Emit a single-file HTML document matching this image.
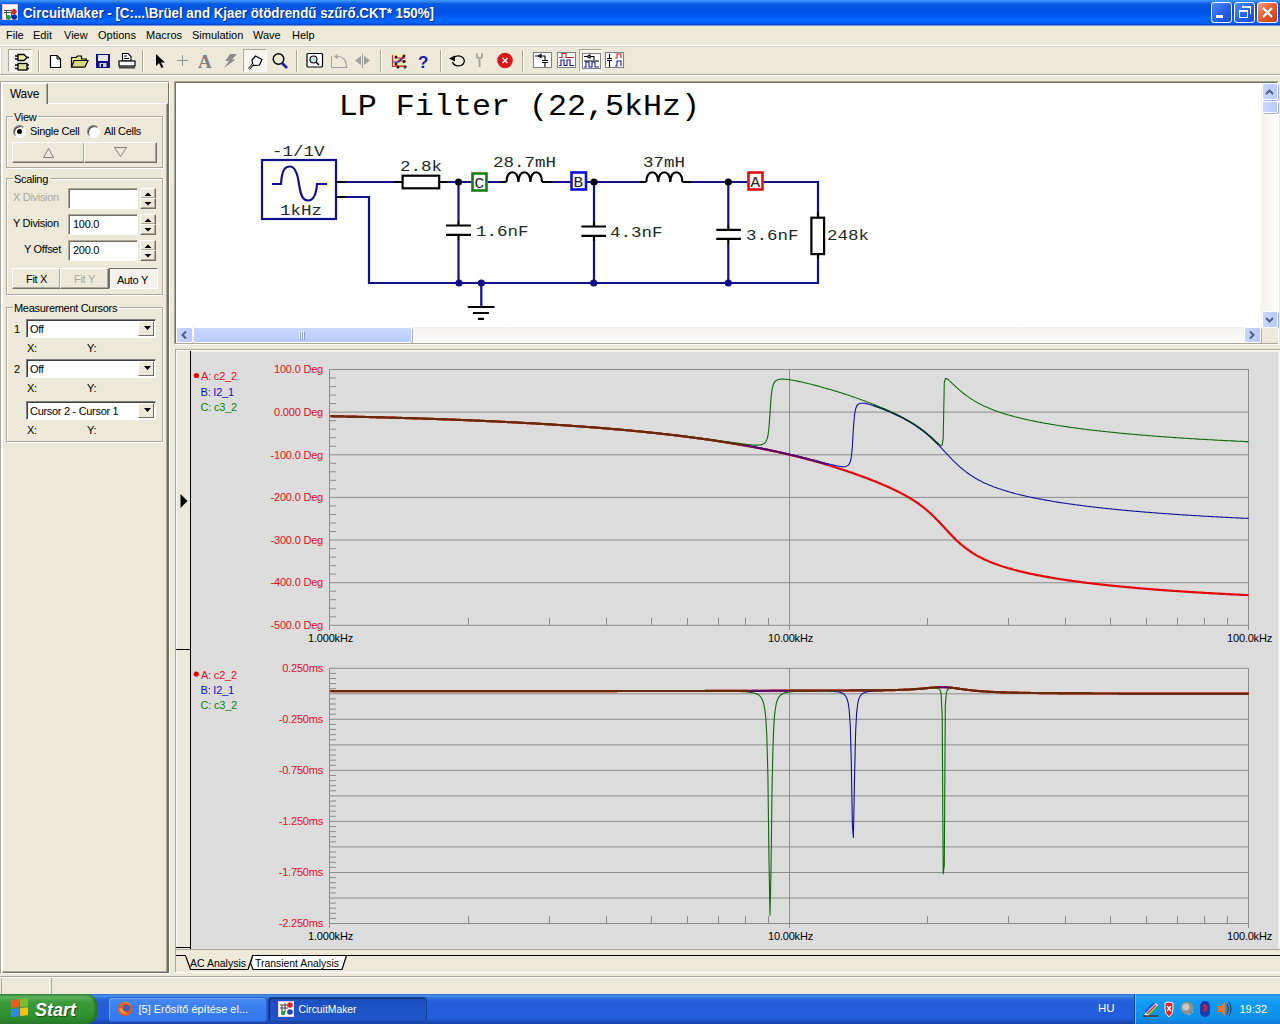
<!DOCTYPE html>
<html><head><meta charset="utf-8">
<style>
*{box-sizing:border-box;margin:0;padding:0}
#lp{letter-spacing:-0.3px}
html,body{width:1280px;height:1024px;overflow:hidden;background:#ece9d8;font-family:"Liberation Sans",sans-serif;font-size:11px;color:#000}
.a{position:absolute}
#title{left:0;top:0;width:1280px;height:26px;background:linear-gradient(#3d9bff 0px,#2a7ef5 2px,#0758e0 4px,#0053e3 9px,#0054e6 14px,#005cf5 16px,#0066ff 19px,#0062fa 23px,#0a3fbf 25px,#e8e8f0 26px)}
#title .t{left:22px;top:5px;color:#fff;font-weight:bold;font-size:13px;letter-spacing:0.1px;white-space:nowrap;text-shadow:1px 1px 0 #0a2a80}
.tb{top:2px;width:21px;height:21px;border:1px solid #fff;border-radius:3px;background:linear-gradient(135deg,#4c8dff,#245ce8 60%,#1b4fd6)}
.menu span{position:absolute;top:29px;font-size:11px}
.sep{width:2px;border-left:1px solid #aca899;border-right:1px solid #fff}
.btn{background:#ece9d8;border-top:1px solid #fff;border-left:1px solid #fff;border-right:1px solid #716f64;border-bottom:1px solid #716f64;box-shadow:inset -1px -1px 0 #aca899;text-align:center}
.grp{border:1px solid #aca899;box-shadow:inset 1px 1px 0 #fff,1px 1px 0 #fff}
.grp .gl{position:absolute;left:6px;top:-6px;background:#ece9d8;padding:0 2px 0 1px}
.edit{background:#fff;border-top:1px solid #aca899;border-left:1px solid #aca899;border-right:1px solid #fff;border-bottom:1px solid #fff;box-shadow:inset 1px 1px 0 #716f64}
.combo{background:#fff;border-top:1px solid #7f7f7f;border-left:1px solid #7f7f7f;border-right:1px solid #fff;border-bottom:1px solid #fff;box-shadow:inset 1px 1px 0 #404040}
.cbtn{position:absolute;right:1px;top:1px;width:16px;bottom:1px;background:#ece9d8;border-top:1px solid #fff;border-left:1px solid #fff;border-right:1px solid #716f64;border-bottom:1px solid #716f64}
.sb{background:linear-gradient(90deg,#c8d6fb,#b7cafb);border:1px solid #fff;border-radius:2px;box-shadow:1px 1px 0 #a0b0d8}
svg{position:absolute;left:0;top:0}
</style></head><body>
<div id="title" class="a">
 <svg width="16" height="16" style="left:2px;top:4px" viewBox="0 0 16 16">
  <rect x="0" y="0" width="16" height="16" fill="#f0c8f0"/>
  <rect x="1" y="1" width="14" height="14" fill="#fff"/>
  <path d="M2 6.5H11M2 8.5H10M4.5 6V15M9.5 8V13.5H12" stroke="#5a4a3a" stroke-width="1" fill="none"/>
  <path d="M11 4.5L15 7.5L11 10.5Z" fill="#d03020"/><circle cx="12" cy="7.5" r="2.6" fill="#d03020"/>
  <circle cx="12.3" cy="13" r="2.8" fill="#1020c0"/>
  <circle cx="6.5" cy="13.5" r="2.4" fill="#20a040"/>
 </svg>
 <svg width="700" height="26" viewBox="0 0 700 26" style="left:0;top:0"><text x="23" y="18.4" font-family="Liberation Sans" font-weight="bold" font-size="14" fill="#0a2a80" textLength="411" lengthAdjust="spacingAndGlyphs" transform="translate(1,1)">CircuitMaker - [C:...\Brüel and Kjaer ötödrendű szűrő.CKT* 150%]</text><text x="23" y="18.4" font-family="Liberation Sans" font-weight="bold" font-size="14" fill="#fff" textLength="411" lengthAdjust="spacingAndGlyphs">CircuitMaker - [C:...\Brüel and Kjaer ötödrendű szűrő.CKT* 150%]</text></svg>
 <div class="a tb" style="left:1211px"><div class="a" style="left:4px;top:12px;width:7px;height:3px;background:#fff"></div></div>
 <div class="a tb" style="left:1234px"><div class="a" style="left:4px;top:7px;width:9px;height:8px;border:1.5px solid #fff;border-top-width:2px"></div><div class="a" style="left:7px;top:3px;width:9px;height:8px;border:1.5px solid #fff;border-top-width:2px;border-left:none;border-bottom:none"></div></div>
 <div class="a tb" style="left:1257px;background:linear-gradient(135deg,#f0a080,#e05a30 50%,#c83c14)"><svg width="19" height="19" style="left:0;top:0"><path d="M5 5L14 14M14 5L5 14" stroke="#fff" stroke-width="2.2"/></svg></div>
</div>
<div class="a menu" style="left:0;top:26px;width:1280px;height:19px">
 <span style="left:6px;top:3px">File</span><span style="left:33px;top:3px">Edit</span><span style="left:64px;top:3px">View</span><span style="left:98px;top:3px">Options</span><span style="left:146px;top:3px">Macros</span><span style="left:192px;top:3px">Simulation</span><span style="left:253px;top:3px">Wave</span><span style="left:292px;top:3px">Help</span>
</div>
<div class="a" style="left:0;top:45px;width:1280px;height:1px;background:#fff"></div>
<div class="a" style="left:0;top:46px;width:1280px;height:1px;background:#d4d0c8"></div>
<div class="a" style="left:0;top:74px;width:1280px;height:1px;background:#aca899"></div>
<div class="a" style="left:0;top:75px;width:1280px;height:1px;background:#fff"></div>
<div class="a" style="left:0px;top:47px;width:2px;height:27px;border-left:1px solid #fff;border-right:1px solid #d8d4c4"></div>
<!-- pressed toggle 1 -->
<div class="a" style="left:8px;top:49px;width:24px;height:23px;background:#f6f5ee;border-top:1px solid #aca899;border-left:1px solid #aca899;border-right:1px solid #fff;border-bottom:1px solid #fff"></div>
<div class="a" style="left:243px;top:49px;width:24px;height:23px;background:#f6f5ee;border-top:1px solid #aca899;border-left:1px solid #aca899;border-right:1px solid #fff;border-bottom:1px solid #fff"></div>
<div class="a" style="left:579px;top:49px;width:23px;height:23px;background:#f6f5ee;border-top:1px solid #aca899;border-left:1px solid #aca899;border-right:1px solid #fff;border-bottom:1px solid #fff"></div>
<div class="a sep" style="left:38px;top:50px;height:22px"></div>
<div class="a sep" style="left:142px;top:50px;height:22px"></div>
<div class="a sep" style="left:296px;top:50px;height:22px"></div>
<div class="a sep" style="left:380px;top:50px;height:22px"></div>
<div class="a sep" style="left:440px;top:50px;height:22px"></div>
<div class="a sep" style="left:522px;top:50px;height:22px"></div>
<svg width="640" height="78" viewBox="0 0 640 78" style="left:0;top:0">
 <!-- gates icon -->
 <g stroke="#000" stroke-width="1.3" fill="#f0f0a0">
  <path d="M18 54.5H24L27 57.5L24 60.5H18Z"/>
  <path d="M15 56H18M15 59H18M27 57.5H29" fill="none"/>
  <rect x="18" y="63.5" width="9" height="6.5" fill="#e0e0a0"/>
  <path d="M15 65H18M15 68.5H18M27 65H29M27 68.5H29" fill="none"/>
 </g>
 <!-- new -->
 <path d="M50.5 55.5H57L60.5 59V67.5H50.5Z" fill="#fff" stroke="#000" stroke-width="1.2"/>
 <path d="M57 55.5V59H60.5" fill="none" stroke="#000" stroke-width="1"/>
 <!-- open -->
 <path d="M71.5 57.5H76L77.5 56H81.5V59H86.5L84 67H71.5Z" fill="#e8e890" stroke="#000" stroke-width="1.2"/>
 <path d="M71.5 67L74 60.5H88L85 67Z" fill="#d8d880" stroke="#000" stroke-width="1.2"/>
 <!-- save -->
 <rect x="96" y="54" width="14" height="14" fill="#10108a"/>
 <rect x="98" y="55" width="10" height="6" fill="#e8e8e8"/>
 <rect x="99.5" y="63" width="7" height="4" fill="#d0d0d0"/>
 <rect x="101" y="64" width="2" height="3" fill="#10108a"/>
 <!-- print -->
 <path d="M122.5 53.5H128L131 56.5V61H122.5Z" fill="#fff" stroke="#000" stroke-width="1.1"/>
 <rect x="119" y="61" width="16" height="5" fill="#fff" stroke="#000" stroke-width="1.2"/>
 <rect x="119" y="66.5" width="16" height="2" fill="#404040"/>
 <path d="M124 56H127M124 58.5H129" stroke="#000" stroke-width="1"/>
 <!-- arrow -->
 <path d="M156 54V66L159 63L161.5 68L163.5 67L161 62.5H165Z" fill="#000"/>
 <!-- plus -->
 <path d="M177 60.5H188M182.5 55V66" stroke="#909090" stroke-width="1"/>
 <!-- A -->
 <text x="198" y="68" font-family="Liberation Serif" font-size="19" fill="#808080" font-weight="bold">A</text>
 <!-- lightning -->
 <path d="M230 54H237L232 59.5H235.5L224 68L229 61H225.5Z" fill="#8c8c8c"/>
 <!-- probe -->
 <path d="M255.5 56L262 59.5L259.5 65L253 65.5L252 60Z" fill="#fff" stroke="#000" stroke-width="1.2"/>
 <path d="M253 64L249 69" stroke="#000" stroke-width="2.2"/>
 <path d="M253 64L249 69" stroke="#fff" stroke-width="0.8"/>
 <!-- magnifier -->
 <circle cx="278.5" cy="59" r="5.3" fill="none" stroke="#000" stroke-width="1.4"/>
 <path d="M282 63L287 68" stroke="#2020b0" stroke-width="2.6"/>
 <!-- zoom window -->
 <rect x="307" y="53.5" width="15.5" height="13.5" fill="#fff" stroke="#000" stroke-width="1.2" rx="1"/>
 <circle cx="313.5" cy="59.5" r="3.5" fill="#c8e0e0" stroke="#000" stroke-width="1.1"/>
 <path d="M316 62L319 65" stroke="#000" stroke-width="1.5"/>
 <!-- rotate disabled -->
 <path d="M331.5 56V67.5H347.5" fill="none" stroke="#a0a0a0" stroke-width="1"/>
 <path d="M337 56.5Q346 56 346.5 67" fill="none" stroke="#a0a0a0" stroke-width="1.2"/>
 <path d="M334 56.5L337.5 54V59Z" fill="#a0a0a0"/>
 <!-- flip disabled -->
 <path d="M361 56V65L355 60.5Z M364 56V65L370 60.5Z" fill="#a0a0a0"/>
 <path d="M362.5 53.5V68" stroke="#a0a0a0" stroke-width="1"/>
 <!-- net -->
 <rect x="392" y="53" width="14" height="14" fill="#f4ee80" opacity="0.35"/>
 <path d="M392.5 55V66.5H407M395 64L404 56M395 58H405M397 61H406M395 66H406" fill="none" stroke="#c03030" stroke-width="1.2"/>
 <path d="M393 62H399L404 57" fill="none" stroke="#3030b0" stroke-width="1.2"/>
 <g fill="#401010"><circle cx="396" cy="57" r="1.5"/><circle cx="404" cy="56" r="1.5"/><circle cx="396" cy="64" r="1.5"/><circle cx="404" cy="61.5" r="1.5"/><circle cx="398" cy="67" r="1.5"/><circle cx="405" cy="67" r="1.5"/></g>
 <!-- ? -->
 <text x="418" y="68" font-family="Liberation Sans" font-size="17" font-weight="bold" fill="#1818b0">?</text>
 <!-- undo -->
 <path d="M454 57.5A6 5 0 1 1 452.5 62" fill="none" stroke="#000" stroke-width="1.3"/>
 <path d="M449 58.5L455 55.5V61.5Z" fill="#000"/>
 <!-- wrench gray -->
 <path d="M477 53.5V57Q479.5 59.5 482 57V53.5M479.5 59V67" fill="none" stroke="#a8a8a0" stroke-width="2"/>
 <!-- stop -->
 <circle cx="505" cy="60.5" r="7.8" fill="#d81818"/>
 <path d="M502.5 58L507.5 63M507.5 58L502.5 63" stroke="#fff" stroke-width="1.4"/>
 <!-- 4 icons -->
 <g stroke-width="1.1" fill="none">
  <rect x="533.5" y="52.5" width="18" height="15" fill="#fff" stroke="#808080"/>
  <path d="M535 56H538L541 54.5V57.5L538 56M541 56H545V60M542 60.5H548M542 62.5H548M545 63V67" stroke="#000"/>
  <rect x="557.5" y="52.5" width="18" height="15" fill="#fff" stroke="#808080"/>
  <path d="M559 57.5H562V53.5H566V57.5H574" stroke="#d02020"/>
  <path d="M559 65.5H561V60H564V65.5H567V60H570V65.5H574" stroke="#1818a0"/>
  <rect x="582.5" y="53.5" width="18" height="15" fill="#fff" stroke="#808080"/>
  <path d="M584 56.5H587L590 55V58L587 56.5M590 56.5H594V60M584 61H599" stroke="#000"/>
  <path d="M584 67H586V62H589V67H592V62H595V67H599" stroke="#1818a0"/>
  <rect x="605.5" y="52.5" width="18" height="15" fill="#fff" stroke="#808080"/>
  <path d="M609.5 54V58M607 58.5H612M607 60.5H612M609.5 61V67" stroke="#000"/>
  <path d="M615 58H617V54H621V58" stroke="#d02020"/>
  <path d="M615 66H617V61H621V66" stroke="#1818a0"/>
 </g>
</svg>
<div id="lp"><!-- left panel frame -->
<div class="a" style="left:0;top:81px;width:170px;height:893px;border-top:1px solid #aca899;border-left:1px solid #aca899;border-right:1px solid #fff;border-bottom:1px solid #fff"></div>
<div class="a" style="left:1px;top:82px;width:168px;height:891px;border-top:1px solid #fff;border-left:1px solid #fff;border-right:1px solid #716f64"></div>
<!-- tab page -->
<div class="a" style="left:2px;top:103px;width:166px;height:870px;border-top:1px solid #fff;border-left:1px solid #fff;border-right:1px solid #716f64;border-bottom:1px solid #716f64;box-shadow:inset -1px -1px 0 #aca899"></div>
<div class="a" style="left:2px;top:83px;width:46px;height:21px;background:#ece9d8;border-top:1px solid #fff;border-left:1px solid #fff;border-right:1px solid #716f64;box-shadow:inset -1px 0 0 #aca899"></div>
<div class="a" style="left:10px;top:87px;font-size:12px">Wave</div>
<!-- View group -->
<div class="a grp" style="left:6px;top:116px;width:157px;height:52px"><span class="gl">View</span></div>
<div class="a" style="left:13px;top:125px;width:13px;height:13px;border-radius:50%;background:radial-gradient(circle at 60% 60%,#fff 45%,#e8e6dc 100%);border:1px solid;border-color:#808080 #fff #fff #808080;box-shadow:inset 1px 1px 0 #404040"></div>
<div class="a" style="left:17px;top:129px;width:5px;height:5px;border-radius:50%;background:#000"></div>
<div class="a" style="left:30px;top:125px">Single Cell</div>
<div class="a" style="left:87px;top:125px;width:13px;height:13px;border-radius:50%;background:radial-gradient(circle at 60% 60%,#fff 45%,#e8e6dc 100%);border:1px solid;border-color:#808080 #fff #fff #808080;box-shadow:inset 1px 1px 0 #404040"></div>
<div class="a" style="left:104px;top:125px">All Cells</div>
<div class="a btn" style="left:12px;top:142px;width:73px;height:21px"></div>
<div class="a btn" style="left:84px;top:142px;width:73px;height:21px"></div>
<svg width="170" height="460" viewBox="0 0 170 460" style="left:0;top:0">
 <path d="M43.5 157.5L48.5 148.5L53.5 157.5Z" fill="none" stroke="#808080" stroke-width="1"/>
 <path d="M114.5 147.5L120.5 156.5L126.5 147.5Z" fill="none" stroke="#808080" stroke-width="1"/>
</svg>
<!-- Scaling -->
<div class="a grp" style="left:6px;top:178px;width:157px;height:117px"><span class="gl">Scaling</span></div>
<div class="a" style="left:13px;top:191px;color:#aca899">X Division</div>
<div class="a edit" style="left:68px;top:188px;width:70px;height:21px;"></div>
<div class="a" style="left:13px;top:217px">Y Division</div>
<div class="a edit" style="left:68px;top:214px;width:70px;height:21px"></div>
<div class="a" style="left:73px;top:218px">100.0</div>
<div class="a" style="left:24px;top:243px">Y Offset</div>
<div class="a edit" style="left:68px;top:240px;width:70px;height:21px"></div>
<div class="a" style="left:73px;top:244px">200.0</div>
<!-- spinners -->
<div class="a btn" style="left:140px;top:188px;width:16px;height:11px"></div><div class="a btn" style="left:140px;top:198px;width:16px;height:11px"></div>
<div class="a btn" style="left:140px;top:214px;width:16px;height:11px"></div><div class="a btn" style="left:140px;top:224px;width:16px;height:11px"></div>
<div class="a btn" style="left:140px;top:240px;width:16px;height:11px"></div><div class="a btn" style="left:140px;top:250px;width:16px;height:11px"></div>
<svg width="170" height="460" viewBox="0 0 170 460" style="left:0;top:0">
 <g fill="#000">
  <path d="M144.5 196H151.5L148 192.5Z"/><path d="M144.5 202H151.5L148 205.5Z"/>
  <path d="M144.5 222H151.5L148 218.5Z"/><path d="M144.5 228H151.5L148 231.5Z"/>
  <path d="M144.5 248H151.5L148 244.5Z"/><path d="M144.5 254H151.5L148 257.5Z"/>
 </g>
</svg>
<div class="a btn" style="left:12px;top:268px;width:49px;height:21px"></div>
<div class="a btn" style="left:60px;top:268px;width:49px;height:21px"></div>
<div class="a" style="left:109px;top:268px;width:49px;height:21px;background:#f4f3ee;border-top:1px solid #716f64;border-left:1px solid #716f64;border-right:1px solid #fff;border-bottom:1px solid #fff"></div>
<div class="a" style="left:26px;top:273px">Fit X</div>
<div class="a" style="left:74px;top:273px;color:#aca899">Fit Y</div>
<div class="a" style="left:117px;top:274px">Auto Y</div>
<!-- Measurement cursors -->
<div class="a grp" style="left:6px;top:307px;width:157px;height:135px"><span class="gl">Measurement Cursors</span></div>
<div class="a" style="left:14px;top:323px">1</div>
<div class="a combo" style="left:26px;top:319px;width:130px;height:19px"><span class="a" style="left:3px;top:3px">Off</span><div class="cbtn"></div></div>
<div class="a" style="left:27px;top:342px">X:</div><div class="a" style="left:87px;top:342px">Y:</div>
<div class="a" style="left:14px;top:363px">2</div>
<div class="a combo" style="left:26px;top:359px;width:130px;height:19px"><span class="a" style="left:3px;top:3px">Off</span><div class="cbtn"></div></div>
<div class="a" style="left:27px;top:382px">X:</div><div class="a" style="left:87px;top:382px">Y:</div>
<div class="a combo" style="left:26px;top:401px;width:130px;height:19px"><span class="a" style="left:3px;top:3px">Cursor 2 - Cursor 1</span><div class="cbtn"></div></div>
<div class="a" style="left:27px;top:424px">X:</div><div class="a" style="left:87px;top:424px">Y:</div>
<svg width="170" height="460" viewBox="0 0 170 460" style="left:0;top:0">
 <g fill="#000">
  <path d="M144 326H151L147.5 330Z"/>
  <path d="M144 366H151L147.5 370Z"/>
  <path d="M144 408H151L147.5 412Z"/>
 </g>
</svg>
</div><!-- schematic frame -->
<div class="a" style="left:174px;top:81px;width:1105px;height:264px;border-top:1px solid #aca899;border-left:1px solid #aca899;border-right:1px solid #fff;border-bottom:1px solid #fff"></div>
<div class="a" style="left:175px;top:82px;width:1103px;height:262px;background:#fff;border-top:1px solid #716f64;border-left:1px solid #716f64;border-right:1px solid #ece9d8;border-bottom:1px solid #ece9d8"></div>
<!-- v scrollbar -->
<div class="a" style="left:1261px;top:83px;width:17px;height:245px;background:linear-gradient(90deg,#f3f1ec,#fefefb)"></div>
<div class="a sb" style="left:1262px;top:83px;width:16px;height:17px"></div>
<div class="a sb" style="left:1262px;top:101px;width:16px;height:12px"></div>
<div class="a sb" style="left:1262px;top:311px;width:16px;height:17px"></div>
<!-- h scrollbar -->
<div class="a" style="left:176px;top:327px;width:1086px;height:17px;background:linear-gradient(#f3f1ec,#fefefb)"></div>
<div class="a sb" style="left:176px;top:327px;width:17px;height:16px"></div>
<div class="a sb" style="left:193px;top:327px;width:219px;height:16px;background:linear-gradient(#cad8fc,#b8cbfa)"></div>
<div class="a sb" style="left:1244px;top:327px;width:17px;height:16px"></div>
<div class="a" style="left:1262px;top:328px;width:16px;height:15px;background:#ece9d8"></div><div class="a" style="left:176px;top:343px;width:1102px;height:1px;background:#aca899"></div>
<svg width="1280" height="350" viewBox="0 0 1280 350" style="left:0;top:0">
 <g fill="none" stroke="#4d6185" stroke-width="2">
  <path d="M1266 94L1269.5 90.5L1273 94"/>
  <path d="M1266 318L1269.5 321.5L1273 318"/>
  <path d="M186 331.5L182.5 335L186 338.5"/>
  <path d="M1250 331.5L1253.5 335L1250 338.5"/>
 </g>
 <g stroke="#eef3fe" stroke-width="1"><path d="M299.5 331V339M301.5 331V339M303.5 331V339"/></g>
 <g stroke="#8ca0d0" stroke-width="1"><path d="M300.5 332V340M302.5 332V340M304.5 332V340"/></g>
</svg>
<!-- chart frame -->
<div class="a" style="left:175px;top:349px;width:1105px;height:624px;border-top:1px solid #aca899;border-left:1px solid #aca899"></div>
<div class="a" style="left:176px;top:350px;width:1104px;height:1px;background:#fff"></div>
<div class="a" style="left:176px;top:351px;width:15px;height:598px;background:#ece9d8;border-left:1px solid #fbfaf4"></div>
<div class="a" style="left:190px;top:351px;width:1px;height:598px;background:#000"></div>
<div class="a" style="left:176px;top:947px;width:15px;height:1px;background:#000"></div>
<div class="a" style="left:176px;top:649px;width:15px;height:1px;background:#000"></div>
<div class="a" style="left:191px;top:351px;width:1087px;height:598px;background:#dcdcdc;border-top:1px solid #f2f1ea"></div>
<div class="a" style="left:1278px;top:351px;width:2px;height:598px;background:#f0f0f0"></div>
<div class="a" style="left:176px;top:949px;width:1104px;height:1px;background:#aca899"></div>
<!-- tabs -->
<div class="a" style="left:176px;top:955px;width:1104px;height:1px;background:#000"></div>
<div class="a" style="left:175px;top:972px;width:1105px;height:1px;background:#fff"></div>
<svg width="1280" height="1024" viewBox="0 0 1280 1024" style="left:0;top:0">
 <path d="M252.5 955.5L250.5 963L253 969.5H342L346.5 955.5Z" fill="#fff" stroke="#000" stroke-width="1.2"/><path d="M185.5 955.5L190.5 969.5H248L252.5 956" fill="#ece9d8" stroke="#000" stroke-width="1.2"/>
 
 <path d="M186 955.5H252" stroke="#ece9d8" stroke-width="1.6"/>
 <text x="190" y="966.5" font-family="Liberation Sans" font-size="11.5" textLength="56" lengthAdjust="spacingAndGlyphs">AC Analysis</text>
 <text x="255" y="966.5" font-family="Liberation Sans" font-size="11.5" textLength="84" lengthAdjust="spacingAndGlyphs">Transient Analysis</text>
</svg>
<!-- status bar -->
<div class="a" style="left:0;top:976px;width:1280px;height:1px;background:#aca899"></div>
<div class="a" style="left:0;top:977px;width:1280px;height:1px;background:#fff"></div>
<div class="a" style="left:0;top:978px;width:2px;height:16px;border-right:1px solid #aca899"></div>
<div class="a" style="left:49px;top:978px;width:3px;height:16px;border-left:1px solid #fff;border-right:1px solid #aca899"></div>
<svg width="1280" height="350" viewBox="0 0 1280 350" style="left:0;top:0">
 <text transform="translate(338.8,114.7) scale(1,0.912)" font-family="Liberation Mono" font-size="31.7" fill="#000">LP Filter (22,5kHz)</text>
 <g font-family="Liberation Mono" font-size="17.5" fill="#202828">
  <text transform="translate(272.0,155.7) scale(1,0.87)">-1/1V</text>
  <text transform="translate(280.0,215) scale(1,0.87)">1kHz</text>
  <text transform="translate(400.0,171.3) scale(1,0.87)">2.8k</text>
  <text transform="translate(493.0,166.8) scale(1,0.87)">28.7mH</text>
  <text transform="translate(643.0,166.8) scale(1,0.87)">37mH</text>
  <text transform="translate(476.0,236.4) scale(1,0.87)">1.6nF</text>
  <text transform="translate(610.0,237.2) scale(1,0.87)">4.3nF</text>
  <text transform="translate(746.0,239.6) scale(1,0.87)">3.6nF</text>
  <text transform="translate(827.0,239.6) scale(1,0.87)">248k</text>
 </g>
 <g fill="none" stroke="#10108c" stroke-width="2.2">
  <rect x="262" y="160" width="74" height="59"/>
  <path d="M272 184H281C282 168 286 166.5 290 166.5C294 166.5 297 170 299 184C301 198 304 200.5 308 200.5C312 200.5 316 198 317 184H327"/>
  <path d="M345 182H394M447 182H471.5M487.5 182H499M552 182H570.5M587 182H640M691 182H747.5M763.5 182H818V212M818 259V283H369V197H345"/>
  <path d="M458.5 182V221M458.5 240V283M594 182V222M594 241V283M728.3 182V225M728.3 244V283M481.3 283V307"/>
 </g>
 <g fill="none" stroke="#000" stroke-width="2.2">
  <path d="M337 182H345M337 197H345M394 182H402.6M439.2 182H447M499 182H506.4M542 182H552M640 182H646.3M682.4 182H691M818 212V217.7M818 254.1V259"/>
  <rect x="402.6" y="175.7" width="36.6" height="12.6"/>
  <rect x="811.4" y="217.7" width="12.7" height="36.4"/>
  <path d="M506.4 182C506.4 169 518.4 169 518.4 182C518.4 169 530.4 169 530.4 182C530.4 169 542 169 542 182"/>
  <path d="M646.3 182C646.3 169 658.3 169 658.3 182C658.3 169 670.3 169 670.3 182C670.3 169 682.4 169 682.4 182"/>
  <path d="M458.5 221V225.5M458.5 234.8V240M446 225.5H471M446 234.8H471"/>
  <path d="M594 222V226.5M594 235.8V241M581.4 226.5H606M581.4 235.8H606"/>
  <path d="M728.3 225V229.8M728.3 238.9V244M716.3 229.8H740.9M716.3 238.9H740.9"/>
  <path d="M467.7 307H494.5M473 313H489M478 318.8H484"/>
 </g>
 <g fill="#000">
  <circle cx="458.5" cy="182" r="3.6"/><circle cx="594" cy="182" r="3.6"/><circle cx="728.3" cy="182" r="3.6"/>
 </g>
 <g fill="#10108c">
  <circle cx="459" cy="283" r="3.6"/><circle cx="481.3" cy="283" r="3.6"/><circle cx="593.7" cy="283" r="3.6"/><circle cx="728.3" cy="283" r="3.6"/>
 </g>
 <rect x="472.5" y="173.5" width="14" height="17" fill="none" stroke="#108010" stroke-width="2.6"/>
 <rect x="571.5" y="172.5" width="14.5" height="17" fill="none" stroke="#1010e0" stroke-width="2.6"/>
 <rect x="748.5" y="172.5" width="14" height="17" fill="none" stroke="#e01010" stroke-width="2.6"/>
 <g font-family="Liberation Mono" font-size="16" fill="#202020">
  <text transform="translate(474.5,187.5) scale(1,0.87)">C</text><text transform="translate(573.5,187.0) scale(1,0.87)">B</text><text transform="translate(750.5,187.0) scale(1,0.87)">A</text>
 </g>
</svg>
<svg width="1280" height="1024" viewBox="0 0 1280 1024" style="left:0;top:0"><g><rect x="191" y="352" width="1087" height="597" fill="#dcdcdc"/>
<line x1="330" y1="369.5" x2="1248" y2="369.5" stroke="#8c8c8c" stroke-width="1"/>
<line x1="330" y1="378.0" x2="336" y2="378.0" stroke="#8c8c8c" stroke-width="1"/>
<line x1="330" y1="386.6" x2="336" y2="386.6" stroke="#8c8c8c" stroke-width="1"/>
<line x1="330" y1="395.1" x2="336" y2="395.1" stroke="#8c8c8c" stroke-width="1"/>
<line x1="330" y1="403.6" x2="336" y2="403.6" stroke="#8c8c8c" stroke-width="1"/>
<line x1="330" y1="412.1" x2="1248" y2="412.1" stroke="#8c8c8c" stroke-width="1"/>
<line x1="330" y1="420.7" x2="336" y2="420.7" stroke="#8c8c8c" stroke-width="1"/>
<line x1="330" y1="429.2" x2="336" y2="429.2" stroke="#8c8c8c" stroke-width="1"/>
<line x1="330" y1="437.7" x2="336" y2="437.7" stroke="#8c8c8c" stroke-width="1"/>
<line x1="330" y1="446.2" x2="336" y2="446.2" stroke="#8c8c8c" stroke-width="1"/>
<line x1="330" y1="454.8" x2="1248" y2="454.8" stroke="#8c8c8c" stroke-width="1"/>
<line x1="330" y1="463.3" x2="336" y2="463.3" stroke="#8c8c8c" stroke-width="1"/>
<line x1="330" y1="471.8" x2="336" y2="471.8" stroke="#8c8c8c" stroke-width="1"/>
<line x1="330" y1="480.3" x2="336" y2="480.3" stroke="#8c8c8c" stroke-width="1"/>
<line x1="330" y1="488.9" x2="336" y2="488.9" stroke="#8c8c8c" stroke-width="1"/>
<line x1="330" y1="497.4" x2="1248" y2="497.4" stroke="#8c8c8c" stroke-width="1"/>
<line x1="330" y1="505.9" x2="336" y2="505.9" stroke="#8c8c8c" stroke-width="1"/>
<line x1="330" y1="514.5" x2="336" y2="514.5" stroke="#8c8c8c" stroke-width="1"/>
<line x1="330" y1="523.0" x2="336" y2="523.0" stroke="#8c8c8c" stroke-width="1"/>
<line x1="330" y1="531.5" x2="336" y2="531.5" stroke="#8c8c8c" stroke-width="1"/>
<line x1="330" y1="540.0" x2="1248" y2="540.0" stroke="#8c8c8c" stroke-width="1"/>
<line x1="330" y1="548.6" x2="336" y2="548.6" stroke="#8c8c8c" stroke-width="1"/>
<line x1="330" y1="557.1" x2="336" y2="557.1" stroke="#8c8c8c" stroke-width="1"/>
<line x1="330" y1="565.6" x2="336" y2="565.6" stroke="#8c8c8c" stroke-width="1"/>
<line x1="330" y1="574.1" x2="336" y2="574.1" stroke="#8c8c8c" stroke-width="1"/>
<line x1="330" y1="582.7" x2="1248" y2="582.7" stroke="#8c8c8c" stroke-width="1"/>
<line x1="330" y1="591.2" x2="336" y2="591.2" stroke="#8c8c8c" stroke-width="1"/>
<line x1="330" y1="599.7" x2="336" y2="599.7" stroke="#8c8c8c" stroke-width="1"/>
<line x1="330" y1="608.2" x2="336" y2="608.2" stroke="#8c8c8c" stroke-width="1"/>
<line x1="330" y1="616.8" x2="336" y2="616.8" stroke="#8c8c8c" stroke-width="1"/>
<line x1="330" y1="625.3" x2="1248" y2="625.3" stroke="#8c8c8c" stroke-width="1"/>
<line x1="329.5" y1="369" x2="329.5" y2="630" stroke="#8c8c8c" stroke-width="1"/>
<line x1="1248.5" y1="369" x2="1248.5" y2="630" stroke="#8c8c8c" stroke-width="1"/>
<line x1="789.5" y1="369" x2="789.5" y2="630" stroke="#8c8c8c" stroke-width="1"/>
<line x1="468.5" y1="618" x2="468.5" y2="625" stroke="#8c8c8c" stroke-width="1"/>
<line x1="549.5" y1="618" x2="549.5" y2="625" stroke="#8c8c8c" stroke-width="1"/>
<line x1="606.5" y1="618" x2="606.5" y2="625" stroke="#8c8c8c" stroke-width="1"/>
<line x1="651.5" y1="618" x2="651.5" y2="625" stroke="#8c8c8c" stroke-width="1"/>
<line x1="687.5" y1="618" x2="687.5" y2="625" stroke="#8c8c8c" stroke-width="1"/>
<line x1="718.5" y1="618" x2="718.5" y2="625" stroke="#8c8c8c" stroke-width="1"/>
<line x1="745.5" y1="618" x2="745.5" y2="625" stroke="#8c8c8c" stroke-width="1"/>
<line x1="768.5" y1="618" x2="768.5" y2="625" stroke="#8c8c8c" stroke-width="1"/>
<line x1="927.5" y1="618" x2="927.5" y2="625" stroke="#8c8c8c" stroke-width="1"/>
<line x1="1008.5" y1="618" x2="1008.5" y2="625" stroke="#8c8c8c" stroke-width="1"/>
<line x1="1065.5" y1="618" x2="1065.5" y2="625" stroke="#8c8c8c" stroke-width="1"/>
<line x1="1110.5" y1="618" x2="1110.5" y2="625" stroke="#8c8c8c" stroke-width="1"/>
<line x1="1146.5" y1="618" x2="1146.5" y2="625" stroke="#8c8c8c" stroke-width="1"/>
<line x1="1177.5" y1="618" x2="1177.5" y2="625" stroke="#8c8c8c" stroke-width="1"/>
<line x1="1204.5" y1="618" x2="1204.5" y2="625" stroke="#8c8c8c" stroke-width="1"/>
<line x1="1227.5" y1="618" x2="1227.5" y2="625" stroke="#8c8c8c" stroke-width="1"/>
<line x1="330" y1="668.3" x2="1248" y2="668.3" stroke="#8c8c8c" stroke-width="1"/>
<line x1="330" y1="673.4" x2="336" y2="673.4" stroke="#8c8c8c" stroke-width="1"/>
<line x1="330" y1="678.5" x2="336" y2="678.5" stroke="#8c8c8c" stroke-width="1"/>
<line x1="330" y1="683.6" x2="336" y2="683.6" stroke="#8c8c8c" stroke-width="1"/>
<line x1="330" y1="688.7" x2="336" y2="688.7" stroke="#8c8c8c" stroke-width="1"/>
<line x1="330" y1="693.8" x2="1248" y2="693.8" stroke="#8c8c8c" stroke-width="1"/>
<line x1="330" y1="698.9" x2="336" y2="698.9" stroke="#8c8c8c" stroke-width="1"/>
<line x1="330" y1="704.0" x2="336" y2="704.0" stroke="#8c8c8c" stroke-width="1"/>
<line x1="330" y1="709.1" x2="336" y2="709.1" stroke="#8c8c8c" stroke-width="1"/>
<line x1="330" y1="714.2" x2="336" y2="714.2" stroke="#8c8c8c" stroke-width="1"/>
<line x1="330" y1="719.3" x2="1248" y2="719.3" stroke="#8c8c8c" stroke-width="1"/>
<line x1="330" y1="724.4" x2="336" y2="724.4" stroke="#8c8c8c" stroke-width="1"/>
<line x1="330" y1="729.5" x2="336" y2="729.5" stroke="#8c8c8c" stroke-width="1"/>
<line x1="330" y1="734.7" x2="336" y2="734.7" stroke="#8c8c8c" stroke-width="1"/>
<line x1="330" y1="739.8" x2="336" y2="739.8" stroke="#8c8c8c" stroke-width="1"/>
<line x1="330" y1="744.9" x2="1248" y2="744.9" stroke="#8c8c8c" stroke-width="1"/>
<line x1="330" y1="750.0" x2="336" y2="750.0" stroke="#8c8c8c" stroke-width="1"/>
<line x1="330" y1="755.1" x2="336" y2="755.1" stroke="#8c8c8c" stroke-width="1"/>
<line x1="330" y1="760.2" x2="336" y2="760.2" stroke="#8c8c8c" stroke-width="1"/>
<line x1="330" y1="765.3" x2="336" y2="765.3" stroke="#8c8c8c" stroke-width="1"/>
<line x1="330" y1="770.4" x2="1248" y2="770.4" stroke="#8c8c8c" stroke-width="1"/>
<line x1="330" y1="775.5" x2="336" y2="775.5" stroke="#8c8c8c" stroke-width="1"/>
<line x1="330" y1="780.6" x2="336" y2="780.6" stroke="#8c8c8c" stroke-width="1"/>
<line x1="330" y1="785.7" x2="336" y2="785.7" stroke="#8c8c8c" stroke-width="1"/>
<line x1="330" y1="790.8" x2="336" y2="790.8" stroke="#8c8c8c" stroke-width="1"/>
<line x1="330" y1="795.9" x2="1248" y2="795.9" stroke="#8c8c8c" stroke-width="1"/>
<line x1="330" y1="801.0" x2="336" y2="801.0" stroke="#8c8c8c" stroke-width="1"/>
<line x1="330" y1="806.1" x2="336" y2="806.1" stroke="#8c8c8c" stroke-width="1"/>
<line x1="330" y1="811.2" x2="336" y2="811.2" stroke="#8c8c8c" stroke-width="1"/>
<line x1="330" y1="816.3" x2="336" y2="816.3" stroke="#8c8c8c" stroke-width="1"/>
<line x1="330" y1="821.4" x2="1248" y2="821.4" stroke="#8c8c8c" stroke-width="1"/>
<line x1="330" y1="826.5" x2="336" y2="826.5" stroke="#8c8c8c" stroke-width="1"/>
<line x1="330" y1="831.6" x2="336" y2="831.6" stroke="#8c8c8c" stroke-width="1"/>
<line x1="330" y1="836.7" x2="336" y2="836.7" stroke="#8c8c8c" stroke-width="1"/>
<line x1="330" y1="841.8" x2="336" y2="841.8" stroke="#8c8c8c" stroke-width="1"/>
<line x1="330" y1="846.9" x2="1248" y2="846.9" stroke="#8c8c8c" stroke-width="1"/>
<line x1="330" y1="852.0" x2="336" y2="852.0" stroke="#8c8c8c" stroke-width="1"/>
<line x1="330" y1="857.1" x2="336" y2="857.1" stroke="#8c8c8c" stroke-width="1"/>
<line x1="330" y1="862.3" x2="336" y2="862.3" stroke="#8c8c8c" stroke-width="1"/>
<line x1="330" y1="867.4" x2="336" y2="867.4" stroke="#8c8c8c" stroke-width="1"/>
<line x1="330" y1="872.5" x2="1248" y2="872.5" stroke="#8c8c8c" stroke-width="1"/>
<line x1="330" y1="877.6" x2="336" y2="877.6" stroke="#8c8c8c" stroke-width="1"/>
<line x1="330" y1="882.7" x2="336" y2="882.7" stroke="#8c8c8c" stroke-width="1"/>
<line x1="330" y1="887.8" x2="336" y2="887.8" stroke="#8c8c8c" stroke-width="1"/>
<line x1="330" y1="892.9" x2="336" y2="892.9" stroke="#8c8c8c" stroke-width="1"/>
<line x1="330" y1="898.0" x2="1248" y2="898.0" stroke="#8c8c8c" stroke-width="1"/>
<line x1="330" y1="903.1" x2="336" y2="903.1" stroke="#8c8c8c" stroke-width="1"/>
<line x1="330" y1="908.2" x2="336" y2="908.2" stroke="#8c8c8c" stroke-width="1"/>
<line x1="330" y1="913.3" x2="336" y2="913.3" stroke="#8c8c8c" stroke-width="1"/>
<line x1="330" y1="918.4" x2="336" y2="918.4" stroke="#8c8c8c" stroke-width="1"/>
<line x1="330" y1="923.5" x2="1248" y2="923.5" stroke="#8c8c8c" stroke-width="1"/>
<line x1="329.5" y1="668" x2="329.5" y2="928" stroke="#8c8c8c" stroke-width="1"/>
<line x1="1248.5" y1="668" x2="1248.5" y2="928" stroke="#8c8c8c" stroke-width="1"/>
<line x1="789.5" y1="668" x2="789.5" y2="928" stroke="#8c8c8c" stroke-width="1"/>
<line x1="468.5" y1="916" x2="468.5" y2="923" stroke="#8c8c8c" stroke-width="1"/>
<line x1="549.5" y1="916" x2="549.5" y2="923" stroke="#8c8c8c" stroke-width="1"/>
<line x1="606.5" y1="916" x2="606.5" y2="923" stroke="#8c8c8c" stroke-width="1"/>
<line x1="651.5" y1="916" x2="651.5" y2="923" stroke="#8c8c8c" stroke-width="1"/>
<line x1="687.5" y1="916" x2="687.5" y2="923" stroke="#8c8c8c" stroke-width="1"/>
<line x1="718.5" y1="916" x2="718.5" y2="923" stroke="#8c8c8c" stroke-width="1"/>
<line x1="745.5" y1="916" x2="745.5" y2="923" stroke="#8c8c8c" stroke-width="1"/>
<line x1="768.5" y1="916" x2="768.5" y2="923" stroke="#8c8c8c" stroke-width="1"/>
<line x1="927.5" y1="916" x2="927.5" y2="923" stroke="#8c8c8c" stroke-width="1"/>
<line x1="1008.5" y1="916" x2="1008.5" y2="923" stroke="#8c8c8c" stroke-width="1"/>
<line x1="1065.5" y1="916" x2="1065.5" y2="923" stroke="#8c8c8c" stroke-width="1"/>
<line x1="1110.5" y1="916" x2="1110.5" y2="923" stroke="#8c8c8c" stroke-width="1"/>
<line x1="1146.5" y1="916" x2="1146.5" y2="923" stroke="#8c8c8c" stroke-width="1"/>
<line x1="1177.5" y1="916" x2="1177.5" y2="923" stroke="#8c8c8c" stroke-width="1"/>
<line x1="1204.5" y1="916" x2="1204.5" y2="923" stroke="#8c8c8c" stroke-width="1"/>
<line x1="1227.5" y1="916" x2="1227.5" y2="923" stroke="#8c8c8c" stroke-width="1"/>
<polyline fill="none" stroke="#e40808" stroke-width="2.2" stroke-linejoin="round" points="330.5,416.2 331.6,416.2 332.6,416.2 333.7,416.3 334.8,416.3 335.8,416.3 336.9,416.3 337.9,416.3 339.0,416.4 340.0,416.4 341.1,416.4 342.1,416.4 343.2,416.5 344.3,416.5 345.3,416.5 346.4,416.5 347.4,416.6 348.5,416.6 349.5,416.6 350.6,416.6 351.7,416.6 352.7,416.7 353.8,416.7 354.8,416.7 355.9,416.7 356.9,416.8 358.0,416.8 359.1,416.8 360.1,416.8 361.2,416.9 362.2,416.9 363.3,416.9 364.3,416.9 365.4,417.0 366.4,417.0 367.5,417.0 368.6,417.0 369.6,417.1 370.7,417.1 371.7,417.1 372.8,417.2 373.8,417.2 374.9,417.2 376.0,417.2 377.0,417.3 378.1,417.3 379.1,417.3 380.2,417.3 381.2,417.4 382.3,417.4 383.3,417.4 384.4,417.5 385.5,417.5 386.5,417.5 387.6,417.5 388.6,417.6 389.7,417.6 390.7,417.6 391.8,417.7 392.9,417.7 393.9,417.7 395.0,417.7 396.0,417.8 397.1,417.8 398.1,417.8 399.2,417.9 400.2,417.9 401.3,417.9 402.4,418.0 403.4,418.0 404.5,418.0 405.5,418.1 406.6,418.1 407.6,418.1 408.7,418.2 409.8,418.2 410.8,418.2 411.9,418.2 412.9,418.3 414.0,418.3 415.0,418.3 416.1,418.4 417.2,418.4 418.2,418.4 419.3,418.5 420.3,418.5 421.4,418.5 422.4,418.6 423.5,418.6 424.5,418.7 425.6,418.7 426.7,418.7 427.7,418.8 428.8,418.8 429.8,418.8 430.9,418.9 431.9,418.9 433.0,418.9 434.1,419.0 435.1,419.0 436.2,419.0 437.2,419.1 438.3,419.1 439.3,419.2 440.4,419.2 441.4,419.2 442.5,419.3 443.6,419.3 444.6,419.3 445.7,419.4 446.7,419.4 447.8,419.5 448.8,419.5 449.9,419.5 451.0,419.6 452.0,419.6 453.1,419.7 454.1,419.7 455.2,419.7 456.2,419.8 457.3,419.8 458.4,419.9 459.4,419.9 460.5,419.9 461.5,420.0 462.6,420.0 463.6,420.1 464.7,420.1 465.7,420.2 466.8,420.2 467.9,420.2 468.9,420.3 470.0,420.3 471.0,420.4 472.1,420.4 473.1,420.5 474.2,420.5 475.3,420.6 476.3,420.6 477.4,420.6 478.4,420.7 479.5,420.7 480.5,420.8 481.6,420.8 482.6,420.9 483.7,420.9 484.8,421.0 485.8,421.0 486.9,421.1 487.9,421.1 489.0,421.2 490.0,421.2 491.1,421.3 492.2,421.3 493.2,421.4 494.3,421.4 495.3,421.5 496.4,421.5 497.4,421.6 498.5,421.6 499.6,421.7 500.6,421.7 501.7,421.8 502.7,421.8 503.8,421.9 504.8,421.9 505.9,422.0 506.9,422.0 508.0,422.1 509.1,422.1 510.1,422.2 511.2,422.2 512.2,422.3 513.3,422.3 514.3,422.4 515.4,422.4 516.5,422.5 517.5,422.6 518.6,422.6 519.6,422.7 520.7,422.7 521.7,422.8 522.8,422.8 523.8,422.9 524.9,423.0 526.0,423.0 527.0,423.1 528.1,423.1 529.1,423.2 530.2,423.2 531.2,423.3 532.3,423.4 533.4,423.4 534.4,423.5 535.5,423.5 536.5,423.6 537.6,423.7 538.6,423.7 539.7,423.8 540.7,423.9 541.8,423.9 542.9,424.0 543.9,424.0 545.0,424.1 546.0,424.2 547.1,424.2 548.1,424.3 549.2,424.4 550.3,424.4 551.3,424.5 552.4,424.6 553.4,424.6 554.5,424.7 555.5,424.8 556.6,424.8 557.7,424.9 558.7,425.0 559.8,425.0 560.8,425.1 561.9,425.2 562.9,425.2 564.0,425.3 565.0,425.4 566.1,425.5 567.2,425.5 568.2,425.6 569.3,425.7 570.3,425.7 571.4,425.8 572.4,425.9 573.5,426.0 574.6,426.0 575.6,426.1 576.7,426.2 577.7,426.3 578.8,426.3 579.8,426.4 580.9,426.5 581.9,426.6 583.0,426.6 584.1,426.7 585.1,426.8 586.2,426.9 587.2,427.0 588.3,427.0 589.3,427.1 590.4,427.2 591.5,427.3 592.5,427.4 593.6,427.4 594.6,427.5 595.7,427.6 596.7,427.7 597.8,427.8 598.9,427.9 599.9,427.9 601.0,428.0 602.0,428.1 603.1,428.2 604.1,428.3 605.2,428.4 606.2,428.5 607.3,428.5 608.4,428.6 609.4,428.7 610.5,428.8 611.5,428.9 612.6,429.0 613.6,429.1 614.7,429.2 615.8,429.3 616.8,429.4 617.9,429.4 618.9,429.5 620.0,429.6 621.0,429.7 622.1,429.8 623.1,429.9 624.2,430.0 625.3,430.1 626.3,430.2 627.4,430.3 628.4,430.4 629.5,430.5 630.5,430.6 631.6,430.7 632.7,430.8 633.7,430.9 634.8,431.0 635.8,431.1 636.9,431.2 637.9,431.3 639.0,431.4 640.0,431.5 641.1,431.6 642.2,431.7 643.2,431.8 644.3,431.9 645.3,432.0 646.4,432.1 647.4,432.3 648.5,432.4 649.6,432.5 650.6,432.6 651.7,432.7 652.7,432.8 653.8,432.9 654.8,433.0 655.9,433.1 657.0,433.3 658.0,433.4 659.1,433.5 660.1,433.6 661.2,433.7 662.2,433.8 663.3,434.0 664.3,434.1 665.4,434.2 666.5,434.3 667.5,434.4 668.6,434.6 669.6,434.7 670.7,434.8 671.7,434.9 672.8,435.0 673.9,435.2 674.9,435.3 676.0,435.4 677.0,435.6 678.1,435.7 679.1,435.8 680.2,435.9 681.2,436.1 682.3,436.2 683.4,436.3 684.4,436.5 685.5,436.6 686.5,436.7 687.6,436.9 688.6,437.0 689.7,437.1 690.8,437.3 691.8,437.4 692.9,437.5 693.9,437.7 695.0,437.8 696.0,438.0 697.1,438.1 698.2,438.3 699.2,438.4 700.3,438.5 701.3,438.7 702.4,438.8 703.4,439.0 704.5,439.1 705.5,439.3 706.6,439.4 707.7,439.6 708.7,439.7 709.8,439.9 710.8,440.0 711.9,440.2 712.9,440.3 714.0,440.5 715.1,440.7 716.1,440.8 717.2,441.0 718.2,441.1 719.3,441.3 720.3,441.5 721.4,441.6 722.4,441.8 723.5,442.0 724.6,442.1 725.6,442.3 726.7,442.5 727.7,442.6 728.8,442.8 729.8,443.0 730.9,443.1 732.0,443.3 733.0,443.5 734.1,443.7 735.1,443.8 736.2,444.0 737.2,444.2 738.3,444.4 739.3,444.6 740.4,444.7 741.5,444.9 742.5,445.1 743.6,445.3 744.6,445.5 745.7,445.7 746.7,445.9 747.8,446.1 748.9,446.3 749.9,446.4 751.0,446.6 752.0,446.8 753.1,447.0 754.1,447.2 755.2,447.4 756.3,447.6 757.3,447.8 758.4,448.0 759.4,448.3 760.5,448.5 761.5,448.7 762.6,448.9 763.6,449.1 764.7,449.3 765.8,449.5 766.8,449.7 767.9,449.9 768.9,450.2 770.0,450.4 771.0,450.6 772.1,450.8 773.2,451.1 774.2,451.3 775.3,451.5 776.3,451.7 777.4,452.0 778.4,452.2 779.5,452.4 780.5,452.7 781.6,452.9 782.7,453.1 783.7,453.4 784.8,453.6 785.8,453.9 786.9,454.1 787.9,454.4 789.0,454.6 790.1,454.9 791.1,455.1 792.2,455.4 793.2,455.6 794.3,455.9 795.3,456.1 796.4,456.4 797.5,456.7 798.5,456.9 799.6,457.2 800.6,457.5 801.7,457.7 802.7,458.0 803.8,458.3 804.8,458.5 805.9,458.8 807.0,459.1 808.0,459.4 809.1,459.7 810.1,459.9 811.2,460.2 812.2,460.5 813.3,460.8 814.4,461.1 815.4,461.4 816.5,461.7 817.5,462.0 818.6,462.3 819.6,462.6 820.7,462.9 821.7,463.2 822.8,463.5 823.9,463.8 824.9,464.1 826.0,464.4 827.0,464.7 828.1,465.1 829.1,465.4 830.2,465.7 831.3,466.0 832.3,466.4 833.4,466.7 834.4,467.0 835.5,467.3 836.5,467.7 837.6,468.0 838.7,468.4 839.7,468.7 840.8,469.0 841.8,469.4 842.9,469.7 843.9,470.1 845.0,470.4 846.0,470.8 847.1,471.1 848.2,471.5 849.2,471.9 850.3,472.2 851.3,472.6 852.4,472.9 853.4,473.3 854.5,473.7 855.6,474.1 856.6,474.4 857.7,474.8 858.7,475.2 859.8,475.6 860.8,476.0 861.9,476.4 862.9,476.7 864.0,477.1 865.1,477.5 866.1,477.9 867.2,478.3 868.2,478.7 869.3,479.1 870.3,479.6 871.4,480.0 872.5,480.4 873.5,480.8 874.6,481.2 875.6,481.6 876.7,482.1 877.7,482.5 878.8,482.9 879.8,483.4 880.9,483.8 882.0,484.3 883.0,484.7 884.1,485.2 885.1,485.6 886.2,486.1 887.2,486.6 888.3,487.0 889.4,487.5 890.4,488.0 891.5,488.5 892.5,489.0 893.6,489.5 894.6,490.0 895.7,490.5 896.8,491.0 897.8,491.5 898.9,492.1 899.9,492.6 901.0,493.1 902.0,493.7 903.1,494.3 904.1,494.8 905.2,495.4 906.3,496.0 907.3,496.6 908.4,497.2 909.4,497.8 910.5,498.5 911.5,499.1 912.6,499.8 913.7,500.4 914.7,501.1 915.8,501.8 916.8,502.5 917.9,503.3 918.9,504.0 920.0,504.8 921.0,505.6 922.1,506.4 923.2,507.2 924.2,508.0 925.3,508.9 926.3,509.8 927.4,510.7 928.4,511.6 929.5,512.5 930.6,513.5 931.6,514.5 932.7,515.5 933.7,516.5 934.8,517.5 935.8,518.6 936.9,519.7 938.0,520.8 939.0,521.9 940.1,523.0 941.1,524.1 942.2,525.2 943.2,526.4 944.3,527.5 945.3,528.7 946.4,529.8 947.5,531.0 948.5,532.1 949.6,533.2 950.6,534.3 951.7,535.4 952.7,536.5 953.8,537.6 954.9,538.6 955.9,539.7 957.0,540.7 958.0,541.7 959.1,542.6 960.1,543.6 961.2,544.5 962.2,545.4 963.3,546.2 964.4,547.1 965.4,547.9 966.5,548.7 967.5,549.5 968.6,550.2 969.6,551.0 970.7,551.7 971.8,552.4 972.8,553.1 973.9,553.7 974.9,554.4 976.0,555.0 977.0,555.6 978.1,556.2 979.1,556.7 980.2,557.3 981.3,557.8 982.3,558.4 983.4,558.9 984.4,559.4 985.5,559.9 986.5,560.3 987.6,560.8 988.7,561.3 989.7,561.7 990.8,562.1 991.8,562.6 992.9,563.0 993.9,563.4 995.0,563.8 996.1,564.2 997.1,564.6 998.2,564.9 999.2,565.3 1000.3,565.7 1001.3,566.0 1002.4,566.3 1003.4,566.7 1004.5,567.0 1005.6,567.3 1006.6,567.7 1007.7,568.0 1008.7,568.3 1009.8,568.6 1010.8,568.9 1011.9,569.2 1013.0,569.5 1014.0,569.8 1015.1,570.0 1016.1,570.3 1017.2,570.6 1018.2,570.9 1019.3,571.1 1020.3,571.4 1021.4,571.6 1022.5,571.9 1023.5,572.1 1024.6,572.4 1025.6,572.6 1026.7,572.9 1027.7,573.1 1028.8,573.3 1029.9,573.6 1030.9,573.8 1032.0,574.0 1033.0,574.2 1034.1,574.4 1035.1,574.7 1036.2,574.9 1037.3,575.1 1038.3,575.3 1039.4,575.5 1040.4,575.7 1041.5,575.9 1042.5,576.1 1043.6,576.3 1044.6,576.5 1045.7,576.7 1046.8,576.9 1047.8,577.1 1048.9,577.2 1049.9,577.4 1051.0,577.6 1052.0,577.8 1053.1,578.0 1054.2,578.1 1055.2,578.3 1056.3,578.5 1057.3,578.7 1058.4,578.8 1059.4,579.0 1060.5,579.2 1061.5,579.3 1062.6,579.5 1063.7,579.6 1064.7,579.8 1065.8,580.0 1066.8,580.1 1067.9,580.3 1068.9,580.4 1070.0,580.6 1071.1,580.7 1072.1,580.9 1073.2,581.0 1074.2,581.2 1075.3,581.3 1076.3,581.5 1077.4,581.6 1078.4,581.7 1079.5,581.9 1080.6,582.0 1081.6,582.2 1082.7,582.3 1083.7,582.4 1084.8,582.6 1085.8,582.7 1086.9,582.8 1088.0,583.0 1089.0,583.1 1090.1,583.2 1091.1,583.3 1092.2,583.5 1093.2,583.6 1094.3,583.7 1095.4,583.8 1096.4,584.0 1097.5,584.1 1098.5,584.2 1099.6,584.3 1100.6,584.5 1101.7,584.6 1102.7,584.7 1103.8,584.8 1104.9,584.9 1105.9,585.0 1107.0,585.1 1108.0,585.3 1109.1,585.4 1110.1,585.5 1111.2,585.6 1112.3,585.7 1113.3,585.8 1114.4,585.9 1115.4,586.0 1116.5,586.1 1117.5,586.2 1118.6,586.3 1119.6,586.4 1120.7,586.5 1121.8,586.6 1122.8,586.7 1123.9,586.8 1124.9,586.9 1126.0,587.0 1127.0,587.1 1128.1,587.2 1129.2,587.3 1130.2,587.4 1131.3,587.5 1132.3,587.6 1133.4,587.7 1134.4,587.8 1135.5,587.9 1136.6,588.0 1137.6,588.1 1138.7,588.2 1139.7,588.3 1140.8,588.4 1141.8,588.5 1142.9,588.5 1143.9,588.6 1145.0,588.7 1146.1,588.8 1147.1,588.9 1148.2,589.0 1149.2,589.1 1150.3,589.2 1151.3,589.2 1152.4,589.3 1153.5,589.4 1154.5,589.5 1155.6,589.6 1156.6,589.7 1157.7,589.7 1158.7,589.8 1159.8,589.9 1160.8,590.0 1161.9,590.1 1163.0,590.1 1164.0,590.2 1165.1,590.3 1166.1,590.4 1167.2,590.4 1168.2,590.5 1169.3,590.6 1170.4,590.7 1171.4,590.7 1172.5,590.8 1173.5,590.9 1174.6,591.0 1175.6,591.0 1176.7,591.1 1177.8,591.2 1178.8,591.2 1179.9,591.3 1180.9,591.4 1182.0,591.5 1183.0,591.5 1184.1,591.6 1185.1,591.7 1186.2,591.7 1187.3,591.8 1188.3,591.9 1189.4,591.9 1190.4,592.0 1191.5,592.1 1192.5,592.1 1193.6,592.2 1194.7,592.3 1195.7,592.3 1196.8,592.4 1197.8,592.5 1198.9,592.5 1199.9,592.6 1201.0,592.7 1202.0,592.7 1203.1,592.8 1204.2,592.8 1205.2,592.9 1206.3,593.0 1207.3,593.0 1208.4,593.1 1209.4,593.1 1210.5,593.2 1211.6,593.3 1212.6,593.3 1213.7,593.4 1214.7,593.4 1215.8,593.5 1216.8,593.5 1217.9,593.6 1218.9,593.7 1220.0,593.7 1221.1,593.8 1222.1,593.8 1223.2,593.9 1224.2,593.9 1225.3,594.0 1226.3,594.0 1227.4,594.1 1228.5,594.2 1229.5,594.2 1230.6,594.3 1231.6,594.3 1232.7,594.4 1233.7,594.4 1234.8,594.5 1235.9,594.5 1236.9,594.6 1238.0,594.6 1239.0,594.7 1240.1,594.7 1241.1,594.8 1242.2,594.8 1243.2,594.9 1244.3,594.9 1245.4,595.0 1246.4,595.0 1247.5,595.1 1248.5,595.1"/>
<polyline fill="none" stroke="#10109a" stroke-width="1.1" stroke-linejoin="round" points="330.5,416.2 331.6,416.2 332.6,416.2 333.7,416.2 334.8,416.3 335.8,416.3 336.9,416.3 337.9,416.3 339.0,416.3 340.0,416.4 341.1,416.4 342.1,416.4 343.2,416.4 344.3,416.5 345.3,416.5 346.4,416.5 347.4,416.5 348.5,416.5 349.5,416.6 350.6,416.6 351.7,416.6 352.7,416.6 353.8,416.7 354.8,416.7 355.9,416.7 356.9,416.7 358.0,416.8 359.1,416.8 360.1,416.8 361.2,416.8 362.2,416.9 363.3,416.9 364.3,416.9 365.4,416.9 366.4,417.0 367.5,417.0 368.6,417.0 369.6,417.0 370.7,417.1 371.7,417.1 372.8,417.1 373.8,417.2 374.9,417.2 376.0,417.2 377.0,417.2 378.1,417.3 379.1,417.3 380.2,417.3 381.2,417.3 382.3,417.4 383.3,417.4 384.4,417.4 385.5,417.5 386.5,417.5 387.6,417.5 388.6,417.5 389.7,417.6 390.7,417.6 391.8,417.6 392.9,417.7 393.9,417.7 395.0,417.7 396.0,417.7 397.1,417.8 398.1,417.8 399.2,417.8 400.2,417.9 401.3,417.9 402.4,417.9 403.4,418.0 404.5,418.0 405.5,418.0 406.6,418.1 407.6,418.1 408.7,418.1 409.8,418.1 410.8,418.2 411.9,418.2 412.9,418.2 414.0,418.3 415.0,418.3 416.1,418.3 417.2,418.4 418.2,418.4 419.3,418.4 420.3,418.5 421.4,418.5 422.4,418.5 423.5,418.6 424.5,418.6 425.6,418.7 426.7,418.7 427.7,418.7 428.8,418.8 429.8,418.8 430.9,418.8 431.9,418.9 433.0,418.9 434.1,418.9 435.1,419.0 436.2,419.0 437.2,419.0 438.3,419.1 439.3,419.1 440.4,419.2 441.4,419.2 442.5,419.2 443.6,419.3 444.6,419.3 445.7,419.3 446.7,419.4 447.8,419.4 448.8,419.5 449.9,419.5 451.0,419.5 452.0,419.6 453.1,419.6 454.1,419.7 455.2,419.7 456.2,419.7 457.3,419.8 458.4,419.8 459.4,419.9 460.5,419.9 461.5,419.9 462.6,420.0 463.6,420.0 464.7,420.1 465.7,420.1 466.8,420.2 467.9,420.2 468.9,420.2 470.0,420.3 471.0,420.3 472.1,420.4 473.1,420.4 474.2,420.5 475.3,420.5 476.3,420.6 477.4,420.6 478.4,420.6 479.5,420.7 480.5,420.7 481.6,420.8 482.6,420.8 483.7,420.9 484.8,420.9 485.8,421.0 486.9,421.0 487.9,421.1 489.0,421.1 490.0,421.2 491.1,421.2 492.2,421.3 493.2,421.3 494.3,421.3 495.3,421.4 496.4,421.4 497.4,421.5 498.5,421.5 499.6,421.6 500.6,421.6 501.7,421.7 502.7,421.7 503.8,421.8 504.8,421.9 505.9,421.9 506.9,422.0 508.0,422.0 509.1,422.1 510.1,422.1 511.2,422.2 512.2,422.2 513.3,422.3 514.3,422.3 515.4,422.4 516.5,422.4 517.5,422.5 518.6,422.5 519.6,422.6 520.7,422.7 521.7,422.7 522.8,422.8 523.8,422.8 524.9,422.9 526.0,422.9 527.0,423.0 528.1,423.1 529.1,423.1 530.2,423.2 531.2,423.2 532.3,423.3 533.4,423.4 534.4,423.4 535.5,423.5 536.5,423.5 537.6,423.6 538.6,423.7 539.7,423.7 540.7,423.8 541.8,423.8 542.9,423.9 543.9,424.0 545.0,424.0 546.0,424.1 547.1,424.2 548.1,424.2 549.2,424.3 550.3,424.4 551.3,424.4 552.4,424.5 553.4,424.6 554.5,424.6 555.5,424.7 556.6,424.8 557.7,424.8 558.7,424.9 559.8,425.0 560.8,425.0 561.9,425.1 562.9,425.2 564.0,425.2 565.0,425.3 566.1,425.4 567.2,425.4 568.2,425.5 569.3,425.6 570.3,425.7 571.4,425.7 572.4,425.8 573.5,425.9 574.6,426.0 575.6,426.0 576.7,426.1 577.7,426.2 578.8,426.2 579.8,426.3 580.9,426.4 581.9,426.5 583.0,426.6 584.1,426.6 585.1,426.7 586.2,426.8 587.2,426.9 588.3,426.9 589.3,427.0 590.4,427.1 591.5,427.2 592.5,427.3 593.6,427.3 594.6,427.4 595.7,427.5 596.7,427.6 597.8,427.7 598.9,427.8 599.9,427.8 601.0,427.9 602.0,428.0 603.1,428.1 604.1,428.2 605.2,428.3 606.2,428.4 607.3,428.4 608.4,428.5 609.4,428.6 610.5,428.7 611.5,428.8 612.6,428.9 613.6,429.0 614.7,429.1 615.8,429.2 616.8,429.2 617.9,429.3 618.9,429.4 620.0,429.5 621.0,429.6 622.1,429.7 623.1,429.8 624.2,429.9 625.3,430.0 626.3,430.1 627.4,430.2 628.4,430.3 629.5,430.4 630.5,430.5 631.6,430.6 632.7,430.7 633.7,430.8 634.8,430.9 635.8,431.0 636.9,431.1 637.9,431.2 639.0,431.3 640.0,431.4 641.1,431.5 642.2,431.6 643.2,431.7 644.3,431.8 645.3,431.9 646.4,432.0 647.4,432.1 648.5,432.2 649.6,432.3 650.6,432.5 651.7,432.6 652.7,432.7 653.8,432.8 654.8,432.9 655.9,433.0 657.0,433.1 658.0,433.2 659.1,433.3 660.1,433.5 661.2,433.6 662.2,433.7 663.3,433.8 664.3,433.9 665.4,434.0 666.5,434.2 667.5,434.3 668.6,434.4 669.6,434.5 670.7,434.6 671.7,434.8 672.8,434.9 673.9,435.0 674.9,435.1 676.0,435.3 677.0,435.4 678.1,435.5 679.1,435.6 680.2,435.8 681.2,435.9 682.3,436.0 683.4,436.2 684.4,436.3 685.5,436.4 686.5,436.6 687.6,436.7 688.6,436.8 689.7,437.0 690.8,437.1 691.8,437.2 692.9,437.4 693.9,437.5 695.0,437.6 696.0,437.8 697.1,437.9 698.2,438.1 699.2,438.2 700.3,438.4 701.3,438.5 702.4,438.6 703.4,438.8 704.5,438.9 705.5,439.1 706.6,439.2 707.7,439.4 708.7,439.5 709.8,439.7 710.8,439.8 711.9,440.0 712.9,440.1 714.0,440.3 715.1,440.4 716.1,440.6 717.2,440.8 718.2,440.9 719.3,441.1 720.3,441.2 721.4,441.4 722.4,441.6 723.5,441.7 724.6,441.9 725.6,442.1 726.7,442.2 727.7,442.4 728.8,442.6 729.8,442.7 730.9,442.9 732.0,443.1 733.0,443.2 734.1,443.4 735.1,443.6 736.2,443.8 737.2,443.9 738.3,444.1 739.3,444.3 740.4,444.5 741.5,444.7 742.5,444.8 743.6,445.0 744.6,445.2 745.7,445.4 746.7,445.6 747.8,445.8 748.9,446.0 749.9,446.2 751.0,446.3 752.0,446.5 753.1,446.7 754.1,446.9 755.2,447.1 756.3,447.3 757.3,447.5 758.4,447.7 759.4,447.9 760.5,448.1 761.5,448.3 762.6,448.5 763.6,448.7 764.7,449.0 765.8,449.2 766.8,449.4 767.9,449.6 768.9,449.8 770.0,450.0 771.0,450.2 772.1,450.5 773.2,450.7 774.2,450.9 775.3,451.1 776.3,451.3 777.4,451.6 778.4,451.8 779.5,452.0 780.5,452.2 781.6,452.5 782.7,452.7 783.7,452.9 784.8,453.2 785.8,453.4 786.9,453.6 787.9,453.9 789.0,454.1 790.1,454.4 791.1,454.6 792.2,454.9 793.2,455.1 794.3,455.3 795.3,455.6 796.4,455.8 797.5,456.1 798.5,456.3 799.6,456.6 800.6,456.9 801.7,457.1 802.7,457.4 803.8,457.6 804.8,457.9 805.9,458.2 807.0,458.4 808.0,458.7 809.1,458.9 810.1,459.2 811.2,459.5 812.2,459.7 813.3,460.0 814.4,460.3 815.4,460.6 816.5,460.8 817.5,461.1 818.6,461.4 819.6,461.6 820.7,461.9 821.7,462.2 822.8,462.5 823.9,462.7 824.9,463.0 826.0,463.3 827.0,463.5 828.1,463.8 829.1,464.1 830.2,464.3 831.3,464.6 832.3,464.8 833.4,465.1 834.4,465.3 835.5,465.6 836.5,465.8 837.6,466.0 838.7,466.2 839.7,466.3 840.8,466.5 841.8,466.6 842.9,466.7 843.9,466.7 845.0,466.6 846.0,466.3 847.1,465.9 848.2,465.2 849.2,464.0 850.3,461.7 851.3,457.0 852.4,446.4 853.4,428.0 854.5,414.8 855.6,409.0 856.6,406.2 857.7,404.7 858.7,403.9 859.8,403.5 860.8,403.2 861.9,403.2 862.9,403.2 864.0,403.3 865.1,403.4 866.1,403.6 867.2,403.8 868.2,404.1 869.3,404.3 870.3,404.6 871.4,404.9 872.5,405.3 873.5,405.6 874.6,405.9 875.6,406.3 876.7,406.7 877.7,407.0 878.8,407.4 879.8,407.8 880.9,408.2 882.0,408.6 883.0,409.0 884.1,409.4 885.1,409.9 886.2,410.3 887.2,410.7 888.3,411.2 889.4,411.6 890.4,412.1 891.5,412.6 892.5,413.0 893.6,413.5 894.6,414.0 895.7,414.5 896.8,415.0 897.8,415.5 898.9,416.0 899.9,416.5 901.0,417.1 902.0,417.6 903.1,418.1 904.1,418.7 905.2,419.3 906.3,419.9 907.3,420.4 908.4,421.0 909.4,421.7 910.5,422.3 911.5,422.9 912.6,423.6 913.7,424.2 914.7,424.9 915.8,425.6 916.8,426.3 917.9,427.0 918.9,427.8 920.0,428.5 921.0,429.3 922.1,430.1 923.2,430.9 924.2,431.7 925.3,432.6 926.3,433.5 927.4,434.3 928.4,435.3 929.5,436.2 930.6,437.1 931.6,438.1 932.7,439.1 933.7,440.1 934.8,441.2 935.8,442.2 936.9,443.3 938.0,444.4 939.0,445.5 940.1,446.6 941.1,447.7 942.2,448.9 943.2,450.0 944.3,451.1 945.3,452.3 946.4,453.4 947.5,454.6 948.5,455.7 949.6,456.8 950.6,457.9 951.7,459.0 952.7,460.1 953.8,461.2 954.9,462.2 955.9,463.2 957.0,464.2 958.0,465.2 959.1,466.2 960.1,467.1 961.2,468.0 962.2,468.9 963.3,469.8 964.4,470.6 965.4,471.4 966.5,472.2 967.5,473.0 968.6,473.8 969.6,474.5 970.7,475.2 971.8,475.9 972.8,476.6 973.9,477.2 974.9,477.9 976.0,478.5 977.0,479.1 978.1,479.7 979.1,480.2 980.2,480.8 981.3,481.3 982.3,481.9 983.4,482.4 984.4,482.9 985.5,483.4 986.5,483.8 987.6,484.3 988.7,484.7 989.7,485.2 990.8,485.6 991.8,486.0 992.9,486.5 993.9,486.9 995.0,487.3 996.1,487.6 997.1,488.0 998.2,488.4 999.2,488.8 1000.3,489.1 1001.3,489.5 1002.4,489.8 1003.4,490.1 1004.5,490.5 1005.6,490.8 1006.6,491.1 1007.7,491.4 1008.7,491.7 1009.8,492.0 1010.8,492.3 1011.9,492.6 1013.0,492.9 1014.0,493.2 1015.1,493.5 1016.1,493.8 1017.2,494.0 1018.2,494.3 1019.3,494.6 1020.3,494.8 1021.4,495.1 1022.5,495.3 1023.5,495.6 1024.6,495.8 1025.6,496.1 1026.7,496.3 1027.7,496.5 1028.8,496.8 1029.9,497.0 1030.9,497.2 1032.0,497.4 1033.0,497.7 1034.1,497.9 1035.1,498.1 1036.2,498.3 1037.3,498.5 1038.3,498.7 1039.4,498.9 1040.4,499.1 1041.5,499.3 1042.5,499.5 1043.6,499.7 1044.6,499.9 1045.7,500.1 1046.8,500.3 1047.8,500.5 1048.9,500.6 1049.9,500.8 1051.0,501.0 1052.0,501.2 1053.1,501.4 1054.2,501.5 1055.2,501.7 1056.3,501.9 1057.3,502.1 1058.4,502.2 1059.4,502.4 1060.5,502.6 1061.5,502.7 1062.6,502.9 1063.7,503.0 1064.7,503.2 1065.8,503.3 1066.8,503.5 1067.9,503.7 1068.9,503.8 1070.0,504.0 1071.1,504.1 1072.1,504.3 1073.2,504.4 1074.2,504.6 1075.3,504.7 1076.3,504.8 1077.4,505.0 1078.4,505.1 1079.5,505.3 1080.6,505.4 1081.6,505.5 1082.7,505.7 1083.7,505.8 1084.8,505.9 1085.8,506.1 1086.9,506.2 1088.0,506.3 1089.0,506.5 1090.1,506.6 1091.1,506.7 1092.2,506.8 1093.2,507.0 1094.3,507.1 1095.4,507.2 1096.4,507.3 1097.5,507.5 1098.5,507.6 1099.6,507.7 1100.6,507.8 1101.7,507.9 1102.7,508.0 1103.8,508.2 1104.9,508.3 1105.9,508.4 1107.0,508.5 1108.0,508.6 1109.1,508.7 1110.1,508.8 1111.2,508.9 1112.3,509.1 1113.3,509.2 1114.4,509.3 1115.4,509.4 1116.5,509.5 1117.5,509.6 1118.6,509.7 1119.6,509.8 1120.7,509.9 1121.8,510.0 1122.8,510.1 1123.9,510.2 1124.9,510.3 1126.0,510.4 1127.0,510.5 1128.1,510.6 1129.2,510.7 1130.2,510.8 1131.3,510.9 1132.3,511.0 1133.4,511.1 1134.4,511.2 1135.5,511.3 1136.6,511.4 1137.6,511.4 1138.7,511.5 1139.7,511.6 1140.8,511.7 1141.8,511.8 1142.9,511.9 1143.9,512.0 1145.0,512.1 1146.1,512.2 1147.1,512.2 1148.2,512.3 1149.2,512.4 1150.3,512.5 1151.3,512.6 1152.4,512.7 1153.5,512.7 1154.5,512.8 1155.6,512.9 1156.6,513.0 1157.7,513.1 1158.7,513.2 1159.8,513.2 1160.8,513.3 1161.9,513.4 1163.0,513.5 1164.0,513.5 1165.1,513.6 1166.1,513.7 1167.2,513.8 1168.2,513.8 1169.3,513.9 1170.4,514.0 1171.4,514.1 1172.5,514.1 1173.5,514.2 1174.6,514.3 1175.6,514.4 1176.7,514.4 1177.8,514.5 1178.8,514.6 1179.9,514.7 1180.9,514.7 1182.0,514.8 1183.0,514.9 1184.1,514.9 1185.1,515.0 1186.2,515.1 1187.3,515.1 1188.3,515.2 1189.4,515.3 1190.4,515.3 1191.5,515.4 1192.5,515.5 1193.6,515.5 1194.7,515.6 1195.7,515.7 1196.8,515.7 1197.8,515.8 1198.9,515.8 1199.9,515.9 1201.0,516.0 1202.0,516.0 1203.1,516.1 1204.2,516.2 1205.2,516.2 1206.3,516.3 1207.3,516.3 1208.4,516.4 1209.4,516.5 1210.5,516.5 1211.6,516.6 1212.6,516.6 1213.7,516.7 1214.7,516.8 1215.8,516.8 1216.8,516.9 1217.9,516.9 1218.9,517.0 1220.0,517.0 1221.1,517.1 1222.1,517.1 1223.2,517.2 1224.2,517.3 1225.3,517.3 1226.3,517.4 1227.4,517.4 1228.5,517.5 1229.5,517.5 1230.6,517.6 1231.6,517.6 1232.7,517.7 1233.7,517.7 1234.8,517.8 1235.9,517.8 1236.9,517.9 1238.0,517.9 1239.0,518.0 1240.1,518.0 1241.1,518.1 1242.2,518.1 1243.2,518.2 1244.3,518.2 1245.4,518.3 1246.4,518.3 1247.5,518.4 1248.5,518.4"/>
<polyline fill="none" stroke="#0e680e" stroke-width="1.1" stroke-linejoin="round" points="330.5,416.1 331.6,416.2 332.6,416.2 333.7,416.2 334.8,416.2 335.8,416.3 336.9,416.3 337.9,416.3 339.0,416.3 340.0,416.3 341.1,416.4 342.1,416.4 343.2,416.4 344.3,416.4 345.3,416.5 346.4,416.5 347.4,416.5 348.5,416.5 349.5,416.6 350.6,416.6 351.7,416.6 352.7,416.6 353.8,416.6 354.8,416.7 355.9,416.7 356.9,416.7 358.0,416.7 359.1,416.8 360.1,416.8 361.2,416.8 362.2,416.8 363.3,416.9 364.3,416.9 365.4,416.9 366.4,416.9 367.5,417.0 368.6,417.0 369.6,417.0 370.7,417.0 371.7,417.1 372.8,417.1 373.8,417.1 374.9,417.2 376.0,417.2 377.0,417.2 378.1,417.2 379.1,417.3 380.2,417.3 381.2,417.3 382.3,417.3 383.3,417.4 384.4,417.4 385.5,417.4 386.5,417.5 387.6,417.5 388.6,417.5 389.7,417.5 390.7,417.6 391.8,417.6 392.9,417.6 393.9,417.7 395.0,417.7 396.0,417.7 397.1,417.8 398.1,417.8 399.2,417.8 400.2,417.8 401.3,417.9 402.4,417.9 403.4,417.9 404.5,418.0 405.5,418.0 406.6,418.0 407.6,418.1 408.7,418.1 409.8,418.1 410.8,418.2 411.9,418.2 412.9,418.2 414.0,418.3 415.0,418.3 416.1,418.3 417.2,418.3 418.2,418.4 419.3,418.4 420.3,418.5 421.4,418.5 422.4,418.5 423.5,418.6 424.5,418.6 425.6,418.6 426.7,418.7 427.7,418.7 428.8,418.7 429.8,418.8 430.9,418.8 431.9,418.8 433.0,418.9 434.1,418.9 435.1,418.9 436.2,419.0 437.2,419.0 438.3,419.0 439.3,419.1 440.4,419.1 441.4,419.2 442.5,419.2 443.6,419.2 444.6,419.3 445.7,419.3 446.7,419.3 447.8,419.4 448.8,419.4 449.9,419.5 451.0,419.5 452.0,419.5 453.1,419.6 454.1,419.6 455.2,419.7 456.2,419.7 457.3,419.7 458.4,419.8 459.4,419.8 460.5,419.9 461.5,419.9 462.6,419.9 463.6,420.0 464.7,420.0 465.7,420.1 466.8,420.1 467.9,420.2 468.9,420.2 470.0,420.2 471.0,420.3 472.1,420.3 473.1,420.4 474.2,420.4 475.3,420.5 476.3,420.5 477.4,420.6 478.4,420.6 479.5,420.6 480.5,420.7 481.6,420.7 482.6,420.8 483.7,420.8 484.8,420.9 485.8,420.9 486.9,421.0 487.9,421.0 489.0,421.1 490.0,421.1 491.1,421.2 492.2,421.2 493.2,421.3 494.3,421.3 495.3,421.4 496.4,421.4 497.4,421.5 498.5,421.5 499.6,421.6 500.6,421.6 501.7,421.7 502.7,421.7 503.8,421.8 504.8,421.8 505.9,421.9 506.9,421.9 508.0,422.0 509.1,422.0 510.1,422.1 511.2,422.1 512.2,422.2 513.3,422.2 514.3,422.3 515.4,422.3 516.5,422.4 517.5,422.4 518.6,422.5 519.6,422.6 520.7,422.6 521.7,422.7 522.8,422.7 523.8,422.8 524.9,422.8 526.0,422.9 527.0,422.9 528.1,423.0 529.1,423.1 530.2,423.1 531.2,423.2 532.3,423.2 533.4,423.3 534.4,423.4 535.5,423.4 536.5,423.5 537.6,423.5 538.6,423.6 539.7,423.7 540.7,423.7 541.8,423.8 542.9,423.8 543.9,423.9 545.0,424.0 546.0,424.0 547.1,424.1 548.1,424.2 549.2,424.2 550.3,424.3 551.3,424.4 552.4,424.4 553.4,424.5 554.5,424.6 555.5,424.6 556.6,424.7 557.7,424.8 558.7,424.8 559.8,424.9 560.8,425.0 561.9,425.0 562.9,425.1 564.0,425.2 565.0,425.2 566.1,425.3 567.2,425.4 568.2,425.4 569.3,425.5 570.3,425.6 571.4,425.7 572.4,425.7 573.5,425.8 574.6,425.9 575.6,425.9 576.7,426.0 577.7,426.1 578.8,426.2 579.8,426.2 580.9,426.3 581.9,426.4 583.0,426.5 584.1,426.5 585.1,426.6 586.2,426.7 587.2,426.8 588.3,426.9 589.3,426.9 590.4,427.0 591.5,427.1 592.5,427.2 593.6,427.3 594.6,427.3 595.7,427.4 596.7,427.5 597.8,427.6 598.9,427.7 599.9,427.7 601.0,427.8 602.0,427.9 603.1,428.0 604.1,428.1 605.2,428.2 606.2,428.3 607.3,428.3 608.4,428.4 609.4,428.5 610.5,428.6 611.5,428.7 612.6,428.8 613.6,428.9 614.7,429.0 615.8,429.0 616.8,429.1 617.9,429.2 618.9,429.3 620.0,429.4 621.0,429.5 622.1,429.6 623.1,429.7 624.2,429.8 625.3,429.9 626.3,430.0 627.4,430.1 628.4,430.2 629.5,430.3 630.5,430.4 631.6,430.5 632.7,430.6 633.7,430.6 634.8,430.7 635.8,430.8 636.9,430.9 637.9,431.0 639.0,431.1 640.0,431.3 641.1,431.4 642.2,431.5 643.2,431.6 644.3,431.7 645.3,431.8 646.4,431.9 647.4,432.0 648.5,432.1 649.6,432.2 650.6,432.3 651.7,432.4 652.7,432.5 653.8,432.6 654.8,432.7 655.9,432.8 657.0,433.0 658.0,433.1 659.1,433.2 660.1,433.3 661.2,433.4 662.2,433.5 663.3,433.6 664.3,433.7 665.4,433.9 666.5,434.0 667.5,434.1 668.6,434.2 669.6,434.3 670.7,434.5 671.7,434.6 672.8,434.7 673.9,434.8 674.9,434.9 676.0,435.1 677.0,435.2 678.1,435.3 679.1,435.4 680.2,435.5 681.2,435.7 682.3,435.8 683.4,435.9 684.4,436.1 685.5,436.2 686.5,436.3 687.6,436.4 688.6,436.6 689.7,436.7 690.8,436.8 691.8,437.0 692.9,437.1 693.9,437.2 695.0,437.4 696.0,437.5 697.1,437.6 698.2,437.8 699.2,437.9 700.3,438.0 701.3,438.2 702.4,438.3 703.4,438.5 704.5,438.6 705.5,438.7 706.6,438.9 707.7,439.0 708.7,439.2 709.8,439.3 710.8,439.4 711.9,439.6 712.9,439.7 714.0,439.9 715.1,440.0 716.1,440.2 717.2,440.3 718.2,440.5 719.3,440.6 720.3,440.8 721.4,440.9 722.4,441.1 723.5,441.2 724.6,441.3 725.6,441.5 726.7,441.6 727.7,441.8 728.8,441.9 729.8,442.1 730.9,442.2 732.0,442.4 733.0,442.5 734.1,442.7 735.1,442.8 736.2,443.0 737.2,443.1 738.3,443.3 739.3,443.4 740.4,443.6 741.5,443.7 742.5,443.8 743.6,444.0 744.6,444.1 745.7,444.2 746.7,444.4 747.8,444.5 748.9,444.6 749.9,444.7 751.0,444.8 752.0,444.9 753.1,445.0 754.1,445.1 755.2,445.1 756.3,445.1 757.3,445.1 758.4,445.1 759.4,445.0 760.5,444.9 761.5,444.6 762.6,444.3 763.6,443.8 764.7,443.0 765.8,441.8 766.8,439.7 767.9,436.0 768.9,428.5 770.0,413.6 771.0,397.6 772.1,389.0 773.2,384.8 774.2,382.6 775.3,381.2 776.3,380.4 777.4,379.9 778.4,379.5 779.5,379.3 780.5,379.2 781.6,379.1 782.7,379.1 783.7,379.1 784.8,379.2 785.8,379.3 786.9,379.4 787.9,379.5 789.0,379.7 790.1,379.8 791.1,380.0 792.2,380.2 793.2,380.3 794.3,380.5 795.3,380.7 796.4,380.9 797.5,381.1 798.5,381.4 799.6,381.6 800.6,381.8 801.7,382.0 802.7,382.3 803.8,382.5 804.8,382.8 805.9,383.0 807.0,383.3 808.0,383.5 809.1,383.8 810.1,384.0 811.2,384.3 812.2,384.6 813.3,384.8 814.4,385.1 815.4,385.4 816.5,385.6 817.5,385.9 818.6,386.2 819.6,386.5 820.7,386.8 821.7,387.1 822.8,387.4 823.9,387.7 824.9,388.0 826.0,388.3 827.0,388.6 828.1,388.9 829.1,389.2 830.2,389.5 831.3,389.8 832.3,390.1 833.4,390.4 834.4,390.8 835.5,391.1 836.5,391.4 837.6,391.7 838.7,392.1 839.7,392.4 840.8,392.7 841.8,393.1 842.9,393.4 843.9,393.7 845.0,394.1 846.0,394.4 847.1,394.8 848.2,395.1 849.2,395.5 850.3,395.8 851.3,396.2 852.4,396.6 853.4,396.9 854.5,397.3 855.6,397.7 856.6,398.0 857.7,398.4 858.7,398.8 859.8,399.2 860.8,399.5 861.9,399.9 862.9,400.3 864.0,400.7 865.1,401.1 866.1,401.5 867.2,401.9 868.2,402.3 869.3,402.7 870.3,403.1 871.4,403.5 872.5,403.9 873.5,404.3 874.6,404.7 875.6,405.1 876.7,405.6 877.7,406.0 878.8,406.4 879.8,406.9 880.9,407.3 882.0,407.7 883.0,408.2 884.1,408.6 885.1,409.1 886.2,409.5 887.2,410.0 888.3,410.5 889.4,410.9 890.4,411.4 891.5,411.9 892.5,412.4 893.6,412.9 894.6,413.4 895.7,413.9 896.8,414.4 897.8,414.9 898.9,415.5 899.9,416.0 901.0,416.5 902.0,417.1 903.1,417.6 904.1,418.2 905.2,418.8 906.3,419.4 907.3,419.9 908.4,420.6 909.4,421.2 910.5,421.8 911.5,422.4 912.6,423.1 913.7,423.7 914.7,424.4 915.8,425.1 916.8,425.8 917.9,426.5 918.9,427.3 920.0,428.0 921.0,428.8 922.1,429.6 923.2,430.4 924.2,431.2 925.3,432.1 926.3,432.9 927.4,433.8 928.4,434.7 929.5,435.6 930.6,436.5 931.6,437.5 932.7,438.4 933.7,439.4 934.8,440.4 935.8,441.3 936.9,442.3 938.0,443.2 939.0,444.1 940.1,444.9 941.1,445.4 942.2,445.0 943.2,437.8 944.3,382.6 945.3,378.6 946.4,378.5 947.5,379.1 948.5,379.9 949.6,380.9 950.6,381.8 951.7,382.8 952.7,383.8 953.8,384.8 954.9,385.8 955.9,386.8 957.0,387.8 958.0,388.7 959.1,389.7 960.1,390.6 961.2,391.5 962.2,392.4 963.3,393.2 964.4,394.0 965.4,394.8 966.5,395.6 967.5,396.4 968.6,397.1 969.6,397.9 970.7,398.6 971.8,399.3 972.8,399.9 973.9,400.6 974.9,401.2 976.0,401.8 977.0,402.4 978.1,403.0 979.1,403.6 980.2,404.1 981.3,404.6 982.3,405.2 983.4,405.7 984.4,406.2 985.5,406.7 986.5,407.1 987.6,407.6 988.7,408.0 989.7,408.5 990.8,408.9 991.8,409.3 992.9,409.7 993.9,410.2 995.0,410.5 996.1,410.9 997.1,411.3 998.2,411.7 999.2,412.0 1000.3,412.4 1001.3,412.7 1002.4,413.1 1003.4,413.4 1004.5,413.8 1005.6,414.1 1006.6,414.4 1007.7,414.7 1008.7,415.0 1009.8,415.3 1010.8,415.6 1011.9,415.9 1013.0,416.2 1014.0,416.5 1015.1,416.8 1016.1,417.0 1017.2,417.3 1018.2,417.6 1019.3,417.8 1020.3,418.1 1021.4,418.3 1022.5,418.6 1023.5,418.8 1024.6,419.1 1025.6,419.3 1026.7,419.6 1027.7,419.8 1028.8,420.0 1029.9,420.3 1030.9,420.5 1032.0,420.7 1033.0,420.9 1034.1,421.1 1035.1,421.4 1036.2,421.6 1037.3,421.8 1038.3,422.0 1039.4,422.2 1040.4,422.4 1041.5,422.6 1042.5,422.8 1043.6,423.0 1044.6,423.2 1045.7,423.4 1046.8,423.5 1047.8,423.7 1048.9,423.9 1049.9,424.1 1051.0,424.3 1052.0,424.5 1053.1,424.6 1054.2,424.8 1055.2,425.0 1056.3,425.2 1057.3,425.3 1058.4,425.5 1059.4,425.7 1060.5,425.8 1061.5,426.0 1062.6,426.1 1063.7,426.3 1064.7,426.5 1065.8,426.6 1066.8,426.8 1067.9,426.9 1068.9,427.1 1070.0,427.2 1071.1,427.4 1072.1,427.5 1073.2,427.7 1074.2,427.8 1075.3,428.0 1076.3,428.1 1077.4,428.2 1078.4,428.4 1079.5,428.5 1080.6,428.7 1081.6,428.8 1082.7,428.9 1083.7,429.1 1084.8,429.2 1085.8,429.3 1086.9,429.5 1088.0,429.6 1089.0,429.7 1090.1,429.9 1091.1,430.0 1092.2,430.1 1093.2,430.2 1094.3,430.4 1095.4,430.5 1096.4,430.6 1097.5,430.7 1098.5,430.8 1099.6,431.0 1100.6,431.1 1101.7,431.2 1102.7,431.3 1103.8,431.4 1104.9,431.5 1105.9,431.7 1107.0,431.8 1108.0,431.9 1109.1,432.0 1110.1,432.1 1111.2,432.2 1112.3,432.3 1113.3,432.4 1114.4,432.5 1115.4,432.6 1116.5,432.8 1117.5,432.9 1118.6,433.0 1119.6,433.1 1120.7,433.2 1121.8,433.3 1122.8,433.4 1123.9,433.5 1124.9,433.6 1126.0,433.7 1127.0,433.8 1128.1,433.9 1129.2,434.0 1130.2,434.1 1131.3,434.2 1132.3,434.2 1133.4,434.3 1134.4,434.4 1135.5,434.5 1136.6,434.6 1137.6,434.7 1138.7,434.8 1139.7,434.9 1140.8,435.0 1141.8,435.1 1142.9,435.2 1143.9,435.2 1145.0,435.3 1146.1,435.4 1147.1,435.5 1148.2,435.6 1149.2,435.7 1150.3,435.8 1151.3,435.8 1152.4,435.9 1153.5,436.0 1154.5,436.1 1155.6,436.2 1156.6,436.3 1157.7,436.3 1158.7,436.4 1159.8,436.5 1160.8,436.6 1161.9,436.7 1163.0,436.7 1164.0,436.8 1165.1,436.9 1166.1,437.0 1167.2,437.0 1168.2,437.1 1169.3,437.2 1170.4,437.3 1171.4,437.3 1172.5,437.4 1173.5,437.5 1174.6,437.6 1175.6,437.6 1176.7,437.7 1177.8,437.8 1178.8,437.8 1179.9,437.9 1180.9,438.0 1182.0,438.1 1183.0,438.1 1184.1,438.2 1185.1,438.3 1186.2,438.3 1187.3,438.4 1188.3,438.5 1189.4,438.5 1190.4,438.6 1191.5,438.7 1192.5,438.7 1193.6,438.8 1194.7,438.9 1195.7,438.9 1196.8,439.0 1197.8,439.1 1198.9,439.1 1199.9,439.2 1201.0,439.2 1202.0,439.3 1203.1,439.4 1204.2,439.4 1205.2,439.5 1206.3,439.5 1207.3,439.6 1208.4,439.7 1209.4,439.7 1210.5,439.8 1211.6,439.8 1212.6,439.9 1213.7,440.0 1214.7,440.0 1215.8,440.1 1216.8,440.1 1217.9,440.2 1218.9,440.2 1220.0,440.3 1221.1,440.4 1222.1,440.4 1223.2,440.5 1224.2,440.5 1225.3,440.6 1226.3,440.6 1227.4,440.7 1228.5,440.7 1229.5,440.8 1230.6,440.8 1231.6,440.9 1232.7,440.9 1233.7,441.0 1234.8,441.1 1235.9,441.1 1236.9,441.2 1238.0,441.2 1239.0,441.3 1240.1,441.3 1241.1,441.4 1242.2,441.4 1243.2,441.5 1244.3,441.5 1245.4,441.6 1246.4,441.6 1247.5,441.6 1248.5,441.7"/>
<polyline fill="none" stroke="#6a2a08" stroke-width="2.2" stroke-linejoin="round" points="330.5,416.2 331.6,416.2 332.6,416.2 333.7,416.3 334.8,416.3 335.8,416.3 336.9,416.3 337.9,416.3 339.0,416.4 340.0,416.4 341.1,416.4 342.1,416.4 343.2,416.5 344.3,416.5 345.3,416.5 346.4,416.5 347.4,416.6 348.5,416.6 349.5,416.6 350.6,416.6 351.7,416.6 352.7,416.7 353.8,416.7 354.8,416.7 355.9,416.7 356.9,416.8 358.0,416.8 359.1,416.8 360.1,416.8 361.2,416.9 362.2,416.9 363.3,416.9 364.3,416.9 365.4,417.0 366.4,417.0 367.5,417.0 368.6,417.0 369.6,417.1 370.7,417.1 371.7,417.1 372.8,417.2 373.8,417.2 374.9,417.2 376.0,417.2 377.0,417.3 378.1,417.3 379.1,417.3 380.2,417.3 381.2,417.4 382.3,417.4 383.3,417.4 384.4,417.5 385.5,417.5 386.5,417.5 387.6,417.5 388.6,417.6 389.7,417.6 390.7,417.6 391.8,417.7 392.9,417.7 393.9,417.7 395.0,417.7 396.0,417.8 397.1,417.8 398.1,417.8 399.2,417.9 400.2,417.9 401.3,417.9 402.4,418.0 403.4,418.0 404.5,418.0 405.5,418.1 406.6,418.1 407.6,418.1 408.7,418.2 409.8,418.2 410.8,418.2 411.9,418.2 412.9,418.3 414.0,418.3 415.0,418.3 416.1,418.4 417.2,418.4 418.2,418.4 419.3,418.5 420.3,418.5 421.4,418.5 422.4,418.6 423.5,418.6 424.5,418.7 425.6,418.7 426.7,418.7 427.7,418.8 428.8,418.8 429.8,418.8 430.9,418.9 431.9,418.9 433.0,418.9 434.1,419.0 435.1,419.0 436.2,419.0 437.2,419.1 438.3,419.1 439.3,419.2 440.4,419.2 441.4,419.2 442.5,419.3 443.6,419.3 444.6,419.3 445.7,419.4 446.7,419.4 447.8,419.5 448.8,419.5 449.9,419.5 451.0,419.6 452.0,419.6 453.1,419.7 454.1,419.7 455.2,419.7 456.2,419.8 457.3,419.8 458.4,419.9 459.4,419.9 460.5,419.9 461.5,420.0 462.6,420.0 463.6,420.1 464.7,420.1 465.7,420.2 466.8,420.2 467.9,420.2 468.9,420.3 470.0,420.3 471.0,420.4 472.1,420.4 473.1,420.5 474.2,420.5 475.3,420.6 476.3,420.6 477.4,420.6 478.4,420.7 479.5,420.7 480.5,420.8 481.6,420.8 482.6,420.9 483.7,420.9 484.8,421.0 485.8,421.0 486.9,421.1 487.9,421.1 489.0,421.2 490.0,421.2 491.1,421.3 492.2,421.3 493.2,421.4 494.3,421.4 495.3,421.5 496.4,421.5 497.4,421.6 498.5,421.6 499.6,421.7 500.6,421.7 501.7,421.8 502.7,421.8 503.8,421.9 504.8,421.9 505.9,422.0 506.9,422.0 508.0,422.1 509.1,422.1 510.1,422.2 511.2,422.2 512.2,422.3 513.3,422.3 514.3,422.4 515.4,422.4 516.5,422.5 517.5,422.6 518.6,422.6 519.6,422.7 520.7,422.7 521.7,422.8 522.8,422.8 523.8,422.9 524.9,423.0 526.0,423.0 527.0,423.1 528.1,423.1 529.1,423.2 530.2,423.2 531.2,423.3 532.3,423.4 533.4,423.4 534.4,423.5 535.5,423.5 536.5,423.6 537.6,423.7 538.6,423.7 539.7,423.8 540.7,423.9 541.8,423.9 542.9,424.0 543.9,424.0 545.0,424.1 546.0,424.2 547.1,424.2 548.1,424.3 549.2,424.4 550.3,424.4 551.3,424.5 552.4,424.6 553.4,424.6 554.5,424.7 555.5,424.8 556.6,424.8 557.7,424.9 558.7,425.0 559.8,425.0 560.8,425.1 561.9,425.2 562.9,425.2 564.0,425.3 565.0,425.4 566.1,425.5 567.2,425.5 568.2,425.6 569.3,425.7 570.3,425.7 571.4,425.8 572.4,425.9 573.5,426.0 574.6,426.0 575.6,426.1 576.7,426.2 577.7,426.3 578.8,426.3 579.8,426.4 580.9,426.5 581.9,426.6 583.0,426.6 584.1,426.7 585.1,426.8 586.2,426.9 587.2,427.0 588.3,427.0 589.3,427.1 590.4,427.2 591.5,427.3 592.5,427.4 593.6,427.4 594.6,427.5 595.7,427.6 596.7,427.7 597.8,427.8 598.9,427.9 599.9,427.9 601.0,428.0 602.0,428.1 603.1,428.2 604.1,428.3 605.2,428.4 606.2,428.5 607.3,428.5 608.4,428.6 609.4,428.7 610.5,428.8 611.5,428.9 612.6,429.0 613.6,429.1 614.7,429.2 615.8,429.3 616.8,429.4 617.9,429.4 618.9,429.5 620.0,429.6 621.0,429.7 622.1,429.8 623.1,429.9 624.2,430.0 625.3,430.1 626.3,430.2 627.4,430.3 628.4,430.4 629.5,430.5 630.5,430.6 631.6,430.7 632.7,430.8 633.7,430.9 634.8,431.0 635.8,431.1 636.9,431.2 637.9,431.3 639.0,431.4 640.0,431.5 641.1,431.6 642.2,431.7 643.2,431.8 644.3,431.9 645.3,432.0 646.4,432.1 647.4,432.3 648.5,432.4 649.6,432.5 650.6,432.6 651.7,432.7 652.7,432.8 653.8,432.9 654.8,433.0 655.9,433.1 657.0,433.3 658.0,433.4 659.1,433.5 660.1,433.6 661.2,433.7 662.2,433.8 663.3,434.0 664.3,434.1 665.4,434.2 666.5,434.3 667.5,434.4 668.6,434.6 669.6,434.7 670.7,434.8 671.7,434.9 672.8,435.0 673.9,435.2 674.9,435.3 676.0,435.4 677.0,435.6 678.1,435.7 679.1,435.8 680.2,435.9 681.2,436.1 682.3,436.2 683.4,436.3 684.4,436.5 685.5,436.6 686.5,436.7 687.6,436.9 688.6,437.0 689.7,437.1 690.8,437.3 691.8,437.4 692.9,437.5 693.9,437.7 695.0,437.8 696.0,438.0 697.1,438.1 698.2,438.3 699.2,438.4 700.3,438.5 701.3,438.7 702.4,438.8 703.4,439.0 704.5,439.1 705.5,439.3 706.6,439.4 707.7,439.6 708.7,439.7 709.8,439.9 710.8,440.0 711.9,440.2 712.9,440.3 714.0,440.5 715.1,440.7 716.1,440.8 717.2,441.0 718.2,441.1 719.3,441.3 720.3,441.5 721.4,441.6 722.4,441.8 723.5,442.0 724.6,442.1 725.6,442.3 726.7,442.5 727.7,442.6 728.8,442.8 729.8,443.0 730.9,443.1 732.0,443.3 733.0,443.5 734.1,443.7 735.1,443.8 736.2,444.0 737.2,444.2 738.3,444.4 739.3,444.6 740.4,444.7 741.5,444.9 742.5,445.1"/>
<polyline fill="none" stroke="#5a0a70" stroke-width="2.0" stroke-linejoin="round" points="743.6,445.2 744.6,445.4 745.7,445.5 746.7,445.7 747.8,445.9 748.9,446.1 749.9,446.3 751.0,446.5 752.0,446.7 753.1,446.9 754.1,447.1 755.2,447.3 756.3,447.5 757.3,447.7 758.4,447.9 759.4,448.1 760.5,448.3 761.5,448.5 762.6,448.7 763.6,448.9 764.7,449.1 765.8,449.3 766.8,449.6 767.9,449.8 768.9,450.0 770.0,450.2 771.0,450.4 772.1,450.6 773.2,450.9 774.2,451.1 775.3,451.3 776.3,451.5 777.4,451.8 778.4,452.0 779.5,452.2 780.5,452.5 781.6,452.7 782.7,452.9 783.7,453.2 784.8,453.4 785.8,453.6 786.9,453.9 787.9,454.1 789.0,454.4 790.1,454.6 791.1,454.9 792.2,455.1 793.2,455.4 794.3,455.6 795.3,455.9 796.4,456.1 797.5,456.4 798.5,456.6 799.6,456.9 800.6,457.2 801.7,457.4 802.7,457.7 803.8,457.9 804.8,458.2 805.9,458.5 807.0,458.8 808.0,459.0 809.1,459.3 810.1,459.6 811.2,459.9 812.2,460.1 813.3,460.4 814.4,460.7 815.4,461.0 816.5,461.3 817.5,461.5 818.6,461.8 819.6,462.1 820.7,462.4 821.7,462.7 822.8,463.0 823.9,463.3 824.9,463.6 826.0,463.9 827.0,464.1 828.1,464.4"/>
<polyline fill="none" stroke="#0c3038" stroke-width="1.5" stroke-linejoin="round" points="873.5,405.6 874.6,405.9 875.6,406.3 876.7,406.7 877.7,407.0 878.8,407.4 879.8,407.8 880.9,408.2 882.0,408.6 883.0,409.0 884.1,409.4 885.1,409.9 886.2,410.3 887.2,410.7 888.3,411.2 889.4,411.6 890.4,412.1 891.5,412.6 892.5,413.0 893.6,413.5 894.6,414.0 895.7,414.5 896.8,415.0 897.8,415.5 898.9,416.0 899.9,416.5 901.0,417.1 902.0,417.6 903.1,418.1 904.1,418.7 905.2,419.3 906.3,419.9 907.3,420.4 908.4,421.0 909.4,421.7 910.5,422.3 911.5,422.9 912.6,423.6 913.7,424.2 914.7,424.9 915.8,425.6 916.8,426.3 917.9,427.0 918.9,427.8 920.0,428.5 921.0,429.3 922.1,430.1 923.2,430.9 924.2,431.7 925.3,432.6 926.3,433.5 927.4,434.3 928.4,435.3 929.5,436.2 930.6,437.1 931.6,438.1 932.7,439.1 933.7,440.1 934.8,441.2 935.8,442.2 936.9,443.3 938.0,444.4"/>
<polyline fill="none" stroke="#e40808" stroke-width="2.2" stroke-linejoin="round" points="330.5,691.1 331.6,691.1 332.6,691.1 333.7,691.1 334.8,691.1 335.8,691.1 336.9,691.1 337.9,691.1 339.0,691.1 340.0,691.1 341.1,691.1 342.1,691.1 343.2,691.1 344.3,691.1 345.3,691.1 346.4,691.1 347.4,691.1 348.5,691.1 349.5,691.1 350.6,691.1 351.7,691.1 352.7,691.1 353.8,691.1 354.8,691.1 355.9,691.1 356.9,691.1 358.0,691.1 359.1,691.1 360.1,691.1 361.2,691.1 362.2,691.1 363.3,691.1 364.3,691.1 365.4,691.1 366.4,691.1 367.5,691.1 368.6,691.1 369.6,691.1 370.7,691.1 371.7,691.1 372.8,691.1 373.8,691.1 374.9,691.1 376.0,691.1 377.0,691.1 378.1,691.1 379.1,691.1 380.2,691.1 381.2,691.1 382.3,691.1 383.3,691.1 384.4,691.1 385.5,691.1 386.5,691.1 387.6,691.1 388.6,691.1 389.7,691.1 390.7,691.1 391.8,691.1 392.9,691.1 393.9,691.1 395.0,691.1 396.0,691.1 397.1,691.1 398.1,691.1 399.2,691.1 400.2,691.1 401.3,691.1 402.4,691.1 403.4,691.1 404.5,691.1 405.5,691.1 406.6,691.1 407.6,691.1 408.7,691.1 409.8,691.1 410.8,691.1 411.9,691.1 412.9,691.1 414.0,691.1 415.0,691.1 416.1,691.1 417.2,691.1 418.2,691.1 419.3,691.1 420.3,691.1 421.4,691.1 422.4,691.1 423.5,691.1 424.5,691.1 425.6,691.1 426.7,691.1 427.7,691.1 428.8,691.1 429.8,691.1 430.9,691.1 431.9,691.1 433.0,691.1 434.1,691.1 435.1,691.1 436.2,691.1 437.2,691.1 438.3,691.1 439.3,691.1 440.4,691.1 441.4,691.1 442.5,691.1 443.6,691.1 444.6,691.1 445.7,691.1 446.7,691.1 447.8,691.1 448.8,691.1 449.9,691.1 451.0,691.1 452.0,691.1 453.1,691.1 454.1,691.1 455.2,691.1 456.2,691.1 457.3,691.1 458.4,691.1 459.4,691.1 460.5,691.1 461.5,691.1 462.6,691.1 463.6,691.1 464.7,691.1 465.7,691.1 466.8,691.1 467.9,691.1 468.9,691.1 470.0,691.1 471.0,691.1 472.1,691.1 473.1,691.1 474.2,691.1 475.3,691.1 476.3,691.1 477.4,691.1 478.4,691.1 479.5,691.1 480.5,691.1 481.6,691.1 482.6,691.1 483.7,691.1 484.8,691.1 485.8,691.1 486.9,691.1 487.9,691.1 489.0,691.1 490.0,691.1 491.1,691.1 492.2,691.1 493.2,691.1 494.3,691.1 495.3,691.1 496.4,691.1 497.4,691.1 498.5,691.1 499.6,691.1 500.6,691.1 501.7,691.1 502.7,691.1 503.8,691.1 504.8,691.1 505.9,691.1 506.9,691.1 508.0,691.1 509.1,691.1 510.1,691.1 511.2,691.1 512.2,691.1 513.3,691.1 514.3,691.1 515.4,691.1 516.5,691.1 517.5,691.1 518.6,691.1 519.6,691.1 520.7,691.1 521.7,691.1 522.8,691.1 523.8,691.1 524.9,691.1 526.0,691.1 527.0,691.1 528.1,691.1 529.1,691.1 530.2,691.1 531.2,691.1 532.3,691.1 533.4,691.1 534.4,691.1 535.5,691.1 536.5,691.1 537.6,691.1 538.6,691.1 539.7,691.1 540.7,691.1 541.8,691.1 542.9,691.1 543.9,691.1 545.0,691.1 546.0,691.1 547.1,691.1 548.1,691.1 549.2,691.1 550.3,691.1 551.3,691.1 552.4,691.1 553.4,691.1 554.5,691.1 555.5,691.1 556.6,691.1 557.7,691.1 558.7,691.1 559.8,691.1 560.8,691.1 561.9,691.1 562.9,691.1 564.0,691.1 565.0,691.1 566.1,691.1 567.2,691.1 568.2,691.1 569.3,691.1 570.3,691.1 571.4,691.1 572.4,691.1 573.5,691.1 574.6,691.1 575.6,691.1 576.7,691.1 577.7,691.1 578.8,691.1 579.8,691.1 580.9,691.1 581.9,691.1 583.0,691.1 584.1,691.1 585.1,691.1 586.2,691.1 587.2,691.1 588.3,691.1 589.3,691.1 590.4,691.1 591.5,691.1 592.5,691.1 593.6,691.1 594.6,691.1 595.7,691.1 596.7,691.1 597.8,691.1 598.9,691.1 599.9,691.1 601.0,691.1 602.0,691.1 603.1,691.1 604.1,691.1 605.2,691.1 606.2,691.1 607.3,691.1 608.4,691.1 609.4,691.1 610.5,691.1 611.5,691.1 612.6,691.1 613.6,691.1 614.7,691.1 615.8,691.1 616.8,691.1 617.9,691.0 618.9,691.0 620.0,691.0 621.0,691.0 622.1,691.0 623.1,691.0 624.2,691.0 625.3,691.0 626.3,691.0 627.4,691.0 628.4,691.0 629.5,691.0 630.5,691.0 631.6,691.0 632.7,691.0 633.7,691.0 634.8,691.0 635.8,691.0 636.9,691.0 637.9,691.0 639.0,691.0 640.0,691.0 641.1,691.0 642.2,691.0 643.2,691.0 644.3,691.0 645.3,691.0 646.4,691.0 647.4,691.0 648.5,691.0 649.6,691.0 650.6,691.0 651.7,691.0 652.7,691.0 653.8,691.0 654.8,691.0 655.9,691.0 657.0,691.0 658.0,691.0 659.1,691.0 660.1,691.0 661.2,691.0 662.2,691.0 663.3,691.0 664.3,691.0 665.4,691.0 666.5,691.0 667.5,691.0 668.6,691.0 669.6,691.0 670.7,691.0 671.7,691.0 672.8,691.0 673.9,691.0 674.9,691.0 676.0,691.0 677.0,691.0 678.1,691.0 679.1,691.0 680.2,691.0 681.2,691.0 682.3,691.0 683.4,691.0 684.4,691.0 685.5,691.0 686.5,691.0 687.6,691.0 688.6,691.0 689.7,691.0 690.8,691.0 691.8,691.0 692.9,691.0 693.9,691.0 695.0,691.0 696.0,691.0 697.1,691.0 698.2,691.0 699.2,691.0 700.3,691.0 701.3,691.0 702.4,691.0 703.4,691.0 704.5,691.0 705.5,690.9 706.6,690.9 707.7,690.9 708.7,690.9 709.8,690.9 710.8,690.9 711.9,690.9 712.9,690.9 714.0,690.9 715.1,690.9 716.1,690.9 717.2,690.9 718.2,690.9 719.3,690.9 720.3,690.9 721.4,690.9 722.4,690.9 723.5,690.9 724.6,690.9 725.6,690.9 726.7,690.9 727.7,690.9 728.8,690.9 729.8,690.9 730.9,690.9 732.0,690.9 733.0,690.9 734.1,690.9 735.1,690.9 736.2,690.9 737.2,690.9 738.3,690.9 739.3,690.9 740.4,690.9 741.5,690.9 742.5,690.9 743.6,690.8 744.6,690.8 745.7,690.8 746.7,690.8 747.8,690.8 748.9,690.8 749.9,690.8 751.0,690.8 752.0,690.8 753.1,690.8 754.1,690.8 755.2,690.8 756.3,690.8 757.3,690.8 758.4,690.8 759.4,690.8 760.5,690.8 761.5,690.8 762.6,690.8 763.6,690.8 764.7,690.8 765.8,690.8 766.8,690.8 767.9,690.8 768.9,690.8 770.0,690.8 771.0,690.7 772.1,690.7 773.2,690.7 774.2,690.7 775.3,690.7 776.3,690.7 777.4,690.7 778.4,690.7 779.5,690.7 780.5,690.7 781.6,690.7 782.7,690.7 783.7,690.7 784.8,690.7 785.8,690.7 786.9,690.7 787.9,690.7 789.0,690.7 790.1,690.7 791.1,690.7 792.2,690.7 793.2,690.7 794.3,690.7 795.3,690.6 796.4,690.6 797.5,690.6 798.5,690.6 799.6,690.6 800.6,690.6 801.7,690.6 802.7,690.6 803.8,690.6 804.8,690.6 805.9,690.6 807.0,690.6 808.0,690.6 809.1,690.6 810.1,690.6 811.2,690.6 812.2,690.6 813.3,690.6 814.4,690.6 815.4,690.6 816.5,690.6 817.5,690.6 818.6,690.5 819.6,690.5 820.7,690.5 821.7,690.5 822.8,690.5 823.9,690.5 824.9,690.5 826.0,690.5 827.0,690.5 828.1,690.5 829.1,690.5 830.2,690.5 831.3,690.5 832.3,690.5 833.4,690.5 834.4,690.5 835.5,690.5 836.5,690.5 837.6,690.5 838.7,690.5 839.7,690.5 840.8,690.5 841.8,690.5 842.9,690.5 843.9,690.5 845.0,690.5 846.0,690.5 847.1,690.5 848.2,690.5 849.2,690.5 850.3,690.4 851.3,690.4 852.4,690.4 853.4,690.4 854.5,690.4 855.6,690.4 856.6,690.4 857.7,690.4 858.7,690.4 859.8,690.4 860.8,690.4 861.9,690.4 862.9,690.4 864.0,690.4 865.1,690.4 866.1,690.4 867.2,690.4 868.2,690.4 869.3,690.4 870.3,690.4 871.4,690.4 872.5,690.4 873.5,690.3 874.6,690.3 875.6,690.3 876.7,690.3 877.7,690.3 878.8,690.3 879.8,690.3 880.9,690.3 882.0,690.3 883.0,690.3 884.1,690.2 885.1,690.2 886.2,690.2 887.2,690.2 888.3,690.2 889.4,690.2 890.4,690.1 891.5,690.1 892.5,690.1 893.6,690.1 894.6,690.1 895.7,690.0 896.8,690.0 897.8,690.0 898.9,689.9 899.9,689.9 901.0,689.9 902.0,689.8 903.1,689.8 904.1,689.7 905.2,689.7 906.3,689.7 907.3,689.6 908.4,689.5 909.4,689.5 910.5,689.4 911.5,689.4 912.6,689.3 913.7,689.2 914.7,689.2 915.8,689.1 916.8,689.0 917.9,688.9 918.9,688.9 920.0,688.8 921.0,688.7 922.1,688.6 923.2,688.5 924.2,688.4 925.3,688.3 926.3,688.2 927.4,688.1 928.4,688.0 929.5,687.9 930.6,687.8 931.6,687.7 932.7,687.6 933.7,687.5 934.8,687.5 935.8,687.4 936.9,687.3 938.0,687.3 939.0,687.2 940.1,687.2 941.1,687.2 942.2,687.2 943.2,687.2 944.3,687.2 945.3,687.2 946.4,687.3 947.5,687.4 948.5,687.4 949.6,687.5 950.6,687.6 951.7,687.7 952.7,687.9 953.8,688.0 954.9,688.1 955.9,688.3 957.0,688.4 958.0,688.6 959.1,688.7 960.1,688.9 961.2,689.0 962.2,689.2 963.3,689.3 964.4,689.5 965.4,689.6 966.5,689.7 967.5,689.9 968.6,690.0 969.6,690.1 970.7,690.2 971.8,690.4 972.8,690.5 973.9,690.6 974.9,690.7 976.0,690.8 977.0,690.9 978.1,691.0 979.1,691.1 980.2,691.2 981.3,691.2 982.3,691.3 983.4,691.4 984.4,691.5 985.5,691.5 986.5,691.6 987.6,691.7 988.7,691.7 989.7,691.8 990.8,691.8 991.8,691.9 992.9,691.9 993.9,692.0 995.0,692.0 996.1,692.1 997.1,692.1 998.2,692.2 999.2,692.2 1000.3,692.3 1001.3,692.3 1002.4,692.3 1003.4,692.4 1004.5,692.4 1005.6,692.4 1006.6,692.5 1007.7,692.5 1008.7,692.5 1009.8,692.5 1010.8,692.6 1011.9,692.6 1013.0,692.6 1014.0,692.7 1015.1,692.7 1016.1,692.7 1017.2,692.7 1018.2,692.7 1019.3,692.8 1020.3,692.8 1021.4,692.8 1022.5,692.8 1023.5,692.8 1024.6,692.9 1025.6,692.9 1026.7,692.9 1027.7,692.9 1028.8,692.9 1029.9,692.9 1030.9,693.0 1032.0,693.0 1033.0,693.0 1034.1,693.0 1035.1,693.0 1036.2,693.0 1037.3,693.0 1038.3,693.1 1039.4,693.1 1040.4,693.1 1041.5,693.1 1042.5,693.1 1043.6,693.1 1044.6,693.1 1045.7,693.1 1046.8,693.2 1047.8,693.2 1048.9,693.2 1049.9,693.2 1051.0,693.2 1052.0,693.2 1053.1,693.2 1054.2,693.2 1055.2,693.2 1056.3,693.2 1057.3,693.2 1058.4,693.3 1059.4,693.3 1060.5,693.3 1061.5,693.3 1062.6,693.3 1063.7,693.3 1064.7,693.3 1065.8,693.3 1066.8,693.3 1067.9,693.3 1068.9,693.3 1070.0,693.3 1071.1,693.3 1072.1,693.3 1073.2,693.4 1074.2,693.4 1075.3,693.4 1076.3,693.4 1077.4,693.4 1078.4,693.4 1079.5,693.4 1080.6,693.4 1081.6,693.4 1082.7,693.4 1083.7,693.4 1084.8,693.4 1085.8,693.4 1086.9,693.4 1088.0,693.4 1089.0,693.4 1090.1,693.4 1091.1,693.4 1092.2,693.5 1093.2,693.5 1094.3,693.5 1095.4,693.5 1096.4,693.5 1097.5,693.5 1098.5,693.5 1099.6,693.5 1100.6,693.5 1101.7,693.5 1102.7,693.5 1103.8,693.5 1104.9,693.5 1105.9,693.5 1107.0,693.5 1108.0,693.5 1109.1,693.5 1110.1,693.5 1111.2,693.5 1112.3,693.5 1113.3,693.5 1114.4,693.5 1115.4,693.5 1116.5,693.5 1117.5,693.5 1118.6,693.5 1119.6,693.6 1120.7,693.6 1121.8,693.6 1122.8,693.6 1123.9,693.6 1124.9,693.6 1126.0,693.6 1127.0,693.6 1128.1,693.6 1129.2,693.6 1130.2,693.6 1131.3,693.6 1132.3,693.6 1133.4,693.6 1134.4,693.6 1135.5,693.6 1136.6,693.6 1137.6,693.6 1138.7,693.6 1139.7,693.6 1140.8,693.6 1141.8,693.6 1142.9,693.6 1143.9,693.6 1145.0,693.6 1146.1,693.6 1147.1,693.6 1148.2,693.6 1149.2,693.6 1150.3,693.6 1151.3,693.6 1152.4,693.6 1153.5,693.6 1154.5,693.6 1155.6,693.6 1156.6,693.6 1157.7,693.6 1158.7,693.6 1159.8,693.6 1160.8,693.6 1161.9,693.6 1163.0,693.6 1164.0,693.7 1165.1,693.7 1166.1,693.7 1167.2,693.7 1168.2,693.7 1169.3,693.7 1170.4,693.7 1171.4,693.7 1172.5,693.7 1173.5,693.7 1174.6,693.7 1175.6,693.7 1176.7,693.7 1177.8,693.7 1178.8,693.7 1179.9,693.7 1180.9,693.7 1182.0,693.7 1183.0,693.7 1184.1,693.7 1185.1,693.7 1186.2,693.7 1187.3,693.7 1188.3,693.7 1189.4,693.7 1190.4,693.7 1191.5,693.7 1192.5,693.7 1193.6,693.7 1194.7,693.7 1195.7,693.7 1196.8,693.7 1197.8,693.7 1198.9,693.7 1199.9,693.7 1201.0,693.7 1202.0,693.7 1203.1,693.7 1204.2,693.7 1205.2,693.7 1206.3,693.7 1207.3,693.7 1208.4,693.7 1209.4,693.7 1210.5,693.7 1211.6,693.7 1212.6,693.7 1213.7,693.7 1214.7,693.7 1215.8,693.7 1216.8,693.7 1217.9,693.7 1218.9,693.7 1220.0,693.7 1221.1,693.7 1222.1,693.7 1223.2,693.7 1224.2,693.7 1225.3,693.7 1226.3,693.7 1227.4,693.7 1228.5,693.7 1229.5,693.7 1230.6,693.7 1231.6,693.7 1232.7,693.7 1233.7,693.7 1234.8,693.7 1235.9,693.7 1236.9,693.7 1238.0,693.7 1239.0,693.7 1240.1,693.7 1241.1,693.7 1242.2,693.7 1243.2,693.7 1244.3,693.7 1245.4,693.7 1246.4,693.7 1247.5,693.7 1248.5,693.7"/>
<polyline fill="none" stroke="#10109a" stroke-width="1.1" stroke-linejoin="round" points="330.5,691.1 331.6,691.1 332.6,691.1 333.7,691.1 334.8,691.1 335.8,691.1 336.9,691.1 337.9,691.1 339.0,691.1 340.0,691.1 341.1,691.1 342.1,691.1 343.2,691.1 344.3,691.1 345.3,691.1 346.4,691.1 347.4,691.1 348.5,691.1 349.5,691.1 350.6,691.1 351.7,691.1 352.7,691.1 353.8,691.1 354.8,691.1 355.9,691.1 356.9,691.1 358.0,691.1 359.1,691.1 360.1,691.1 361.2,691.1 362.2,691.1 363.3,691.1 364.3,691.1 365.4,691.1 366.4,691.1 367.5,691.1 368.6,691.1 369.6,691.1 370.7,691.1 371.7,691.1 372.8,691.1 373.8,691.1 374.9,691.1 376.0,691.1 377.0,691.1 378.1,691.1 379.1,691.1 380.2,691.1 381.2,691.1 382.3,691.1 383.3,691.1 384.4,691.1 385.5,691.1 386.5,691.1 387.6,691.1 388.6,691.1 389.7,691.1 390.7,691.1 391.8,691.1 392.9,691.1 393.9,691.1 395.0,691.1 396.0,691.1 397.1,691.1 398.1,691.1 399.2,691.1 400.2,691.1 401.3,691.1 402.4,691.1 403.4,691.1 404.5,691.1 405.5,691.1 406.6,691.1 407.6,691.1 408.7,691.1 409.8,691.1 410.8,691.1 411.9,691.1 412.9,691.1 414.0,691.1 415.0,691.1 416.1,691.1 417.2,691.1 418.2,691.1 419.3,691.1 420.3,691.1 421.4,691.1 422.4,691.1 423.5,691.1 424.5,691.1 425.6,691.1 426.7,691.1 427.7,691.1 428.8,691.1 429.8,691.1 430.9,691.1 431.9,691.1 433.0,691.1 434.1,691.1 435.1,691.1 436.2,691.1 437.2,691.1 438.3,691.1 439.3,691.1 440.4,691.1 441.4,691.1 442.5,691.1 443.6,691.1 444.6,691.1 445.7,691.1 446.7,691.1 447.8,691.1 448.8,691.1 449.9,691.1 451.0,691.1 452.0,691.1 453.1,691.1 454.1,691.1 455.2,691.1 456.2,691.1 457.3,691.1 458.4,691.1 459.4,691.1 460.5,691.1 461.5,691.1 462.6,691.1 463.6,691.1 464.7,691.1 465.7,691.1 466.8,691.1 467.9,691.1 468.9,691.1 470.0,691.1 471.0,691.1 472.1,691.1 473.1,691.1 474.2,691.1 475.3,691.1 476.3,691.1 477.4,691.1 478.4,691.1 479.5,691.1 480.5,691.1 481.6,691.1 482.6,691.1 483.7,691.1 484.8,691.1 485.8,691.1 486.9,691.1 487.9,691.1 489.0,691.1 490.0,691.1 491.1,691.1 492.2,691.1 493.2,691.1 494.3,691.1 495.3,691.1 496.4,691.1 497.4,691.1 498.5,691.1 499.6,691.1 500.6,691.1 501.7,691.1 502.7,691.1 503.8,691.1 504.8,691.1 505.9,691.1 506.9,691.1 508.0,691.1 509.1,691.1 510.1,691.1 511.2,691.1 512.2,691.1 513.3,691.1 514.3,691.1 515.4,691.1 516.5,691.1 517.5,691.1 518.6,691.1 519.6,691.1 520.7,691.1 521.7,691.1 522.8,691.1 523.8,691.1 524.9,691.1 526.0,691.1 527.0,691.1 528.1,691.1 529.1,691.1 530.2,691.1 531.2,691.1 532.3,691.1 533.4,691.1 534.4,691.1 535.5,691.1 536.5,691.1 537.6,691.1 538.6,691.1 539.7,691.1 540.7,691.1 541.8,691.1 542.9,691.1 543.9,691.1 545.0,691.1 546.0,691.1 547.1,691.1 548.1,691.1 549.2,691.1 550.3,691.1 551.3,691.1 552.4,691.1 553.4,691.1 554.5,691.1 555.5,691.1 556.6,691.1 557.7,691.1 558.7,691.1 559.8,691.1 560.8,691.1 561.9,691.1 562.9,691.1 564.0,691.1 565.0,691.1 566.1,691.1 567.2,691.1 568.2,691.1 569.3,691.1 570.3,691.1 571.4,691.1 572.4,691.1 573.5,691.1 574.6,691.1 575.6,691.1 576.7,691.1 577.7,691.1 578.8,691.1 579.8,691.1 580.9,691.1 581.9,691.1 583.0,691.1 584.1,691.1 585.1,691.1 586.2,691.1 587.2,691.1 588.3,691.1 589.3,691.1 590.4,691.1 591.5,691.1 592.5,691.1 593.6,691.1 594.6,691.1 595.7,691.1 596.7,691.1 597.8,691.1 598.9,691.1 599.9,691.1 601.0,691.1 602.0,691.1 603.1,691.1 604.1,691.1 605.2,691.1 606.2,691.1 607.3,691.1 608.4,691.1 609.4,691.1 610.5,691.1 611.5,691.1 612.6,691.1 613.6,691.1 614.7,691.1 615.8,691.1 616.8,691.1 617.9,691.1 618.9,691.1 620.0,691.1 621.0,691.1 622.1,691.1 623.1,691.1 624.2,691.1 625.3,691.1 626.3,691.1 627.4,691.1 628.4,691.1 629.5,691.1 630.5,691.1 631.6,691.1 632.7,691.1 633.7,691.1 634.8,691.1 635.8,691.1 636.9,691.1 637.9,691.1 639.0,691.1 640.0,691.1 641.1,691.1 642.2,691.1 643.2,691.1 644.3,691.1 645.3,691.1 646.4,691.1 647.4,691.1 648.5,691.1 649.6,691.0 650.6,691.0 651.7,691.0 652.7,691.0 653.8,691.0 654.8,691.0 655.9,691.0 657.0,691.0 658.0,691.0 659.1,691.0 660.1,691.0 661.2,691.0 662.2,691.0 663.3,691.0 664.3,691.0 665.4,691.0 666.5,691.0 667.5,691.0 668.6,691.0 669.6,691.0 670.7,691.0 671.7,691.0 672.8,691.0 673.9,691.0 674.9,691.0 676.0,691.0 677.0,691.0 678.1,691.0 679.1,691.0 680.2,691.0 681.2,691.0 682.3,691.0 683.4,691.0 684.4,691.0 685.5,691.0 686.5,691.0 687.6,691.0 688.6,691.0 689.7,691.0 690.8,691.0 691.8,691.0 692.9,691.0 693.9,691.0 695.0,691.0 696.0,691.0 697.1,691.0 698.2,691.0 699.2,691.0 700.3,691.0 701.3,691.0 702.4,691.0 703.4,691.0 704.5,691.0 705.5,691.0 706.6,691.0 707.7,691.0 708.7,691.0 709.8,691.0 710.8,691.0 711.9,691.0 712.9,691.0 714.0,691.0 715.1,691.0 716.1,691.0 717.2,691.0 718.2,691.0 719.3,691.0 720.3,691.0 721.4,690.9 722.4,690.9 723.5,690.9 724.6,690.9 725.6,690.9 726.7,690.9 727.7,690.9 728.8,690.9 729.8,690.9 730.9,690.9 732.0,690.9 733.0,690.9 734.1,690.9 735.1,690.9 736.2,690.9 737.2,690.9 738.3,690.9 739.3,690.9 740.4,690.9 741.5,690.9 742.5,690.9 743.6,690.9 744.6,690.9 745.7,690.9 746.7,690.9 747.8,690.9 748.9,690.9 749.9,690.9 751.0,690.9 752.0,690.9 753.1,690.9 754.1,690.9 755.2,690.9 756.3,690.9 757.3,690.9 758.4,690.9 759.4,690.9 760.5,690.8 761.5,690.8 762.6,690.8 763.6,690.8 764.7,690.8 765.8,690.8 766.8,690.8 767.9,690.8 768.9,690.8 770.0,690.8 771.0,690.8 772.1,690.8 773.2,690.8 774.2,690.8 775.3,690.8 776.3,690.8 777.4,690.8 778.4,690.8 779.5,690.8 780.5,690.8 781.6,690.8 782.7,690.8 783.7,690.8 784.8,690.8 785.8,690.8 786.9,690.8 787.9,690.8 789.0,690.8 790.1,690.8 791.1,690.8 792.2,690.8 793.2,690.8 794.3,690.8 795.3,690.8 796.4,690.8 797.5,690.8 798.5,690.8 799.6,690.8 800.6,690.8 801.7,690.8 802.7,690.8 803.8,690.8 804.8,690.8 805.9,690.8 807.0,690.8 808.0,690.8 809.1,690.8 810.1,690.8 811.2,690.8 812.2,690.8 813.3,690.8 814.4,690.8 815.4,690.8 816.5,690.8 817.5,690.8 818.6,690.9 819.6,690.9 820.7,690.9 821.7,690.9 822.8,690.9 823.9,690.9 824.9,691.0 826.0,691.0 827.0,691.0 828.1,691.1 829.1,691.1 830.2,691.2 831.3,691.2 832.3,691.3 833.4,691.4 834.4,691.5 835.5,691.6 836.5,691.7 837.6,691.8 838.7,692.0 839.7,692.3 840.8,692.6 841.8,693.0 842.9,693.5 843.9,694.2 845.0,695.3 846.0,696.7 847.1,699.1 848.2,703.0 849.2,710.3 850.3,726.0 851.3,763.6 852.4,826.0 853.4,837.4 854.5,779.8 855.6,732.6 856.6,712.8 857.7,704.0 858.7,699.4 859.8,696.8 860.8,695.2 861.9,694.1 862.9,693.3 864.0,692.8 865.1,692.4 866.1,692.1 867.2,691.8 868.2,691.6 869.3,691.4 870.3,691.3 871.4,691.2 872.5,691.1 873.5,691.0 874.6,690.9 875.6,690.9 876.7,690.8 877.7,690.8 878.8,690.7 879.8,690.7 880.9,690.6 882.0,690.6 883.0,690.5 884.1,690.5 885.1,690.5 886.2,690.4 887.2,690.4 888.3,690.4 889.4,690.4 890.4,690.3 891.5,690.3 892.5,690.3 893.6,690.2 894.6,690.2 895.7,690.2 896.8,690.1 897.8,690.1 898.9,690.0 899.9,690.0 901.0,690.0 902.0,689.9 903.1,689.9 904.1,689.8 905.2,689.8 906.3,689.7 907.3,689.7 908.4,689.6 909.4,689.6 910.5,689.5 911.5,689.4 912.6,689.4 913.7,689.3 914.7,689.2 915.8,689.2 916.8,689.1 917.9,689.0 918.9,688.9 920.0,688.8 921.0,688.7 922.1,688.6 923.2,688.5 924.2,688.4 925.3,688.3 926.3,688.2 927.4,688.1 928.4,688.0 929.5,687.9 930.6,687.8 931.6,687.7 932.7,687.7 933.7,687.6 934.8,687.5 935.8,687.4 936.9,687.4 938.0,687.3 939.0,687.3 940.1,687.2 941.1,687.2 942.2,687.2 943.2,687.2 944.3,687.2 945.3,687.3 946.4,687.3 947.5,687.4 948.5,687.5 949.6,687.5 950.6,687.6 951.7,687.8 952.7,687.9 953.8,688.0 954.9,688.1 955.9,688.3 957.0,688.4 958.0,688.6 959.1,688.7 960.1,688.9 961.2,689.0 962.2,689.2 963.3,689.3 964.4,689.5 965.4,689.6 966.5,689.7 967.5,689.9 968.6,690.0 969.6,690.1 970.7,690.3 971.8,690.4 972.8,690.5 973.9,690.6 974.9,690.7 976.0,690.8 977.0,690.9 978.1,691.0 979.1,691.1 980.2,691.2 981.3,691.3 982.3,691.3 983.4,691.4 984.4,691.5 985.5,691.5 986.5,691.6 987.6,691.7 988.7,691.7 989.7,691.8 990.8,691.9 991.8,691.9 992.9,692.0 993.9,692.0 995.0,692.1 996.1,692.1 997.1,692.1 998.2,692.2 999.2,692.2 1000.3,692.3 1001.3,692.3 1002.4,692.3 1003.4,692.4 1004.5,692.4 1005.6,692.4 1006.6,692.5 1007.7,692.5 1008.7,692.5 1009.8,692.6 1010.8,692.6 1011.9,692.6 1013.0,692.6 1014.0,692.7 1015.1,692.7 1016.1,692.7 1017.2,692.7 1018.2,692.7 1019.3,692.8 1020.3,692.8 1021.4,692.8 1022.5,692.8 1023.5,692.8 1024.6,692.9 1025.6,692.9 1026.7,692.9 1027.7,692.9 1028.8,692.9 1029.9,693.0 1030.9,693.0 1032.0,693.0 1033.0,693.0 1034.1,693.0 1035.1,693.0 1036.2,693.0 1037.3,693.0 1038.3,693.1 1039.4,693.1 1040.4,693.1 1041.5,693.1 1042.5,693.1 1043.6,693.1 1044.6,693.1 1045.7,693.1 1046.8,693.2 1047.8,693.2 1048.9,693.2 1049.9,693.2 1051.0,693.2 1052.0,693.2 1053.1,693.2 1054.2,693.2 1055.2,693.2 1056.3,693.2 1057.3,693.2 1058.4,693.3 1059.4,693.3 1060.5,693.3 1061.5,693.3 1062.6,693.3 1063.7,693.3 1064.7,693.3 1065.8,693.3 1066.8,693.3 1067.9,693.3 1068.9,693.3 1070.0,693.3 1071.1,693.3 1072.1,693.4 1073.2,693.4 1074.2,693.4 1075.3,693.4 1076.3,693.4 1077.4,693.4 1078.4,693.4 1079.5,693.4 1080.6,693.4 1081.6,693.4 1082.7,693.4 1083.7,693.4 1084.8,693.4 1085.8,693.4 1086.9,693.4 1088.0,693.4 1089.0,693.4 1090.1,693.4 1091.1,693.5 1092.2,693.5 1093.2,693.5 1094.3,693.5 1095.4,693.5 1096.4,693.5 1097.5,693.5 1098.5,693.5 1099.6,693.5 1100.6,693.5 1101.7,693.5 1102.7,693.5 1103.8,693.5 1104.9,693.5 1105.9,693.5 1107.0,693.5 1108.0,693.5 1109.1,693.5 1110.1,693.5 1111.2,693.5 1112.3,693.5 1113.3,693.5 1114.4,693.5 1115.4,693.5 1116.5,693.5 1117.5,693.5 1118.6,693.6 1119.6,693.6 1120.7,693.6 1121.8,693.6 1122.8,693.6 1123.9,693.6 1124.9,693.6 1126.0,693.6 1127.0,693.6 1128.1,693.6 1129.2,693.6 1130.2,693.6 1131.3,693.6 1132.3,693.6 1133.4,693.6 1134.4,693.6 1135.5,693.6 1136.6,693.6 1137.6,693.6 1138.7,693.6 1139.7,693.6 1140.8,693.6 1141.8,693.6 1142.9,693.6 1143.9,693.6 1145.0,693.6 1146.1,693.6 1147.1,693.6 1148.2,693.6 1149.2,693.6 1150.3,693.6 1151.3,693.6 1152.4,693.6 1153.5,693.6 1154.5,693.6 1155.6,693.6 1156.6,693.6 1157.7,693.6 1158.7,693.6 1159.8,693.6 1160.8,693.6 1161.9,693.6 1163.0,693.7 1164.0,693.7 1165.1,693.7 1166.1,693.7 1167.2,693.7 1168.2,693.7 1169.3,693.7 1170.4,693.7 1171.4,693.7 1172.5,693.7 1173.5,693.7 1174.6,693.7 1175.6,693.7 1176.7,693.7 1177.8,693.7 1178.8,693.7 1179.9,693.7 1180.9,693.7 1182.0,693.7 1183.0,693.7 1184.1,693.7 1185.1,693.7 1186.2,693.7 1187.3,693.7 1188.3,693.7 1189.4,693.7 1190.4,693.7 1191.5,693.7 1192.5,693.7 1193.6,693.7 1194.7,693.7 1195.7,693.7 1196.8,693.7 1197.8,693.7 1198.9,693.7 1199.9,693.7 1201.0,693.7 1202.0,693.7 1203.1,693.7 1204.2,693.7 1205.2,693.7 1206.3,693.7 1207.3,693.7 1208.4,693.7 1209.4,693.7 1210.5,693.7 1211.6,693.7 1212.6,693.7 1213.7,693.7 1214.7,693.7 1215.8,693.7 1216.8,693.7 1217.9,693.7 1218.9,693.7 1220.0,693.7 1221.1,693.7 1222.1,693.7 1223.2,693.7 1224.2,693.7 1225.3,693.7 1226.3,693.7 1227.4,693.7 1228.5,693.7 1229.5,693.7 1230.6,693.7 1231.6,693.7 1232.7,693.7 1233.7,693.7 1234.8,693.7 1235.9,693.7 1236.9,693.7 1238.0,693.7 1239.0,693.7 1240.1,693.7 1241.1,693.7 1242.2,693.7 1243.2,693.7 1244.3,693.7 1245.4,693.7 1246.4,693.7 1247.5,693.7 1248.5,693.7"/>
<polyline fill="none" stroke="#0e680e" stroke-width="1.1" stroke-linejoin="round" points="330.5,691.1 331.6,691.1 332.6,691.1 333.7,691.1 334.8,691.1 335.8,691.1 336.9,691.1 337.9,691.1 339.0,691.1 340.0,691.1 341.1,691.1 342.1,691.1 343.2,691.1 344.3,691.1 345.3,691.1 346.4,691.1 347.4,691.1 348.5,691.1 349.5,691.1 350.6,691.1 351.7,691.1 352.7,691.1 353.8,691.1 354.8,691.1 355.9,691.1 356.9,691.1 358.0,691.1 359.1,691.1 360.1,691.1 361.2,691.1 362.2,691.1 363.3,691.1 364.3,691.1 365.4,691.1 366.4,691.1 367.5,691.1 368.6,691.1 369.6,691.1 370.7,691.1 371.7,691.1 372.8,691.1 373.8,691.1 374.9,691.1 376.0,691.1 377.0,691.1 378.1,691.1 379.1,691.1 380.2,691.1 381.2,691.1 382.3,691.1 383.3,691.1 384.4,691.1 385.5,691.1 386.5,691.1 387.6,691.1 388.6,691.1 389.7,691.1 390.7,691.1 391.8,691.1 392.9,691.1 393.9,691.1 395.0,691.1 396.0,691.1 397.1,691.1 398.1,691.1 399.2,691.1 400.2,691.1 401.3,691.1 402.4,691.1 403.4,691.1 404.5,691.1 405.5,691.1 406.6,691.1 407.6,691.1 408.7,691.1 409.8,691.1 410.8,691.1 411.9,691.1 412.9,691.1 414.0,691.1 415.0,691.1 416.1,691.1 417.2,691.1 418.2,691.1 419.3,691.1 420.3,691.1 421.4,691.1 422.4,691.1 423.5,691.1 424.5,691.1 425.6,691.1 426.7,691.1 427.7,691.1 428.8,691.1 429.8,691.1 430.9,691.1 431.9,691.1 433.0,691.1 434.1,691.1 435.1,691.1 436.2,691.1 437.2,691.1 438.3,691.1 439.3,691.1 440.4,691.1 441.4,691.1 442.5,691.1 443.6,691.1 444.6,691.1 445.7,691.1 446.7,691.1 447.8,691.1 448.8,691.1 449.9,691.1 451.0,691.1 452.0,691.1 453.1,691.1 454.1,691.1 455.2,691.1 456.2,691.1 457.3,691.1 458.4,691.1 459.4,691.1 460.5,691.1 461.5,691.1 462.6,691.1 463.6,691.1 464.7,691.1 465.7,691.1 466.8,691.1 467.9,691.1 468.9,691.1 470.0,691.1 471.0,691.1 472.1,691.1 473.1,691.1 474.2,691.1 475.3,691.1 476.3,691.1 477.4,691.1 478.4,691.1 479.5,691.1 480.5,691.1 481.6,691.1 482.6,691.1 483.7,691.1 484.8,691.1 485.8,691.1 486.9,691.1 487.9,691.1 489.0,691.1 490.0,691.1 491.1,691.1 492.2,691.1 493.2,691.1 494.3,691.1 495.3,691.1 496.4,691.1 497.4,691.1 498.5,691.1 499.6,691.1 500.6,691.1 501.7,691.1 502.7,691.1 503.8,691.1 504.8,691.1 505.9,691.1 506.9,691.1 508.0,691.1 509.1,691.1 510.1,691.1 511.2,691.1 512.2,691.1 513.3,691.1 514.3,691.1 515.4,691.1 516.5,691.1 517.5,691.1 518.6,691.1 519.6,691.1 520.7,691.1 521.7,691.1 522.8,691.1 523.8,691.1 524.9,691.1 526.0,691.1 527.0,691.1 528.1,691.1 529.1,691.1 530.2,691.1 531.2,691.1 532.3,691.1 533.4,691.1 534.4,691.1 535.5,691.1 536.5,691.1 537.6,691.1 538.6,691.1 539.7,691.1 540.7,691.1 541.8,691.1 542.9,691.1 543.9,691.1 545.0,691.1 546.0,691.1 547.1,691.1 548.1,691.1 549.2,691.1 550.3,691.1 551.3,691.1 552.4,691.1 553.4,691.1 554.5,691.1 555.5,691.1 556.6,691.1 557.7,691.1 558.7,691.1 559.8,691.1 560.8,691.1 561.9,691.1 562.9,691.1 564.0,691.1 565.0,691.1 566.1,691.1 567.2,691.1 568.2,691.1 569.3,691.1 570.3,691.1 571.4,691.1 572.4,691.1 573.5,691.1 574.6,691.1 575.6,691.1 576.7,691.1 577.7,691.1 578.8,691.1 579.8,691.1 580.9,691.1 581.9,691.1 583.0,691.1 584.1,691.1 585.1,691.1 586.2,691.1 587.2,691.1 588.3,691.1 589.3,691.1 590.4,691.1 591.5,691.1 592.5,691.1 593.6,691.1 594.6,691.1 595.7,691.1 596.7,691.1 597.8,691.1 598.9,691.1 599.9,691.1 601.0,691.1 602.0,691.1 603.1,691.1 604.1,691.1 605.2,691.1 606.2,691.1 607.3,691.1 608.4,691.1 609.4,691.1 610.5,691.1 611.5,691.1 612.6,691.1 613.6,691.1 614.7,691.1 615.8,691.1 616.8,691.1 617.9,691.1 618.9,691.1 620.0,691.1 621.0,691.1 622.1,691.1 623.1,691.1 624.2,691.1 625.3,691.1 626.3,691.1 627.4,691.1 628.4,691.1 629.5,691.1 630.5,691.1 631.6,691.1 632.7,691.1 633.7,691.1 634.8,691.1 635.8,691.1 636.9,691.1 637.9,691.1 639.0,691.1 640.0,691.1 641.1,691.1 642.2,691.1 643.2,691.1 644.3,691.1 645.3,691.1 646.4,691.1 647.4,691.1 648.5,691.1 649.6,691.1 650.6,691.1 651.7,691.1 652.7,691.1 653.8,691.1 654.8,691.1 655.9,691.1 657.0,691.1 658.0,691.1 659.1,691.1 660.1,691.1 661.2,691.1 662.2,691.1 663.3,691.1 664.3,691.1 665.4,691.1 666.5,691.1 667.5,691.1 668.6,691.1 669.6,691.1 670.7,691.1 671.7,691.1 672.8,691.1 673.9,691.1 674.9,691.1 676.0,691.1 677.0,691.1 678.1,691.1 679.1,691.1 680.2,691.1 681.2,691.1 682.3,691.1 683.4,691.1 684.4,691.1 685.5,691.1 686.5,691.1 687.6,691.1 688.6,691.1 689.7,691.1 690.8,691.1 691.8,691.1 692.9,691.1 693.9,691.1 695.0,691.1 696.0,691.1 697.1,691.1 698.2,691.1 699.2,691.1 700.3,691.1 701.3,691.1 702.4,691.1 703.4,691.1 704.5,691.1 705.5,691.1 706.6,691.1 707.7,691.1 708.7,691.1 709.8,691.1 710.8,691.1 711.9,691.1 712.9,691.1 714.0,691.1 715.1,691.2 716.1,691.2 717.2,691.2 718.2,691.2 719.3,691.2 720.3,691.2 721.4,691.2 722.4,691.2 723.5,691.2 724.6,691.2 725.6,691.2 726.7,691.2 727.7,691.2 728.8,691.3 729.8,691.3 730.9,691.3 732.0,691.3 733.0,691.3 734.1,691.3 735.1,691.4 736.2,691.4 737.2,691.4 738.3,691.5 739.3,691.5 740.4,691.5 741.5,691.6 742.5,691.6 743.6,691.7 744.6,691.8 745.7,691.8 746.7,691.9 747.8,692.0 748.9,692.1 749.9,692.2 751.0,692.4 752.0,692.6 753.1,692.8 754.1,693.0 755.2,693.3 756.3,693.7 757.3,694.2 758.4,694.8 759.4,695.6 760.5,696.7 761.5,698.2 762.6,700.3 763.6,703.5 764.7,708.7 765.8,717.9 766.8,735.8 767.9,775.4 768.9,855.1 770.0,915.2 771.0,870.2 772.1,785.1 773.2,739.4 774.2,719.1 775.3,709.0 776.3,703.4 777.4,700.0 778.4,697.8 779.5,696.3 780.5,695.2 781.6,694.4 782.7,693.8 783.7,693.3 784.8,692.9 785.8,692.6 786.9,692.4 787.9,692.2 789.0,692.0 790.1,691.8 791.1,691.7 792.2,691.6 793.2,691.5 794.3,691.4 795.3,691.3 796.4,691.3 797.5,691.2 798.5,691.2 799.6,691.1 800.6,691.1 801.7,691.1 802.7,691.0 803.8,691.0 804.8,691.0 805.9,690.9 807.0,690.9 808.0,690.9 809.1,690.9 810.1,690.8 811.2,690.8 812.2,690.8 813.3,690.8 814.4,690.8 815.4,690.8 816.5,690.7 817.5,690.7 818.6,690.7 819.6,690.7 820.7,690.7 821.7,690.7 822.8,690.7 823.9,690.7 824.9,690.7 826.0,690.7 827.0,690.6 828.1,690.6 829.1,690.6 830.2,690.6 831.3,690.6 832.3,690.6 833.4,690.6 834.4,690.6 835.5,690.6 836.5,690.6 837.6,690.6 838.7,690.6 839.7,690.6 840.8,690.6 841.8,690.5 842.9,690.5 843.9,690.5 845.0,690.5 846.0,690.5 847.1,690.5 848.2,690.5 849.2,690.5 850.3,690.5 851.3,690.5 852.4,690.5 853.4,690.5 854.5,690.5 855.6,690.5 856.6,690.5 857.7,690.5 858.7,690.5 859.8,690.5 860.8,690.5 861.9,690.5 862.9,690.5 864.0,690.4 865.1,690.4 866.1,690.4 867.2,690.4 868.2,690.4 869.3,690.4 870.3,690.4 871.4,690.4 872.5,690.4 873.5,690.4 874.6,690.4 875.6,690.4 876.7,690.4 877.7,690.4 878.8,690.3 879.8,690.3 880.9,690.3 882.0,690.3 883.0,690.3 884.1,690.3 885.1,690.3 886.2,690.3 887.2,690.2 888.3,690.2 889.4,690.2 890.4,690.2 891.5,690.2 892.5,690.1 893.6,690.1 894.6,690.1 895.7,690.1 896.8,690.0 897.8,690.0 898.9,690.0 899.9,689.9 901.0,689.9 902.0,689.9 903.1,689.8 904.1,689.8 905.2,689.7 906.3,689.7 907.3,689.6 908.4,689.6 909.4,689.5 910.5,689.5 911.5,689.4 912.6,689.4 913.7,689.3 914.7,689.2 915.8,689.2 916.8,689.1 917.9,689.0 918.9,688.9 920.0,688.8 921.0,688.8 922.1,688.7 923.2,688.6 924.2,688.5 925.3,688.4 926.3,688.3 927.4,688.3 928.4,688.2 929.5,688.1 930.6,688.0 931.6,688.0 932.7,687.9 933.7,687.9 934.8,687.9 935.8,688.0 936.9,688.1 938.0,688.4 939.0,688.9 940.1,690.1 941.1,693.5 942.2,715.9 943.2,873.8 944.3,864.9 945.3,705.4 946.4,692.4 947.5,689.8 948.5,688.9 949.6,688.5 950.6,688.3 951.7,688.3 952.7,688.3 953.8,688.3 954.9,688.4 955.9,688.5 957.0,688.6 958.0,688.7 959.1,688.8 960.1,689.0 961.2,689.1 962.2,689.3 963.3,689.4 964.4,689.5 965.4,689.7 966.5,689.8 967.5,689.9 968.6,690.1 969.6,690.2 970.7,690.3 971.8,690.4 972.8,690.5 973.9,690.6 974.9,690.7 976.0,690.8 977.0,690.9 978.1,691.0 979.1,691.1 980.2,691.2 981.3,691.3 982.3,691.3 983.4,691.4 984.4,691.5 985.5,691.6 986.5,691.6 987.6,691.7 988.7,691.7 989.7,691.8 990.8,691.9 991.8,691.9 992.9,692.0 993.9,692.0 995.0,692.1 996.1,692.1 997.1,692.1 998.2,692.2 999.2,692.2 1000.3,692.3 1001.3,692.3 1002.4,692.3 1003.4,692.4 1004.5,692.4 1005.6,692.4 1006.6,692.5 1007.7,692.5 1008.7,692.5 1009.8,692.6 1010.8,692.6 1011.9,692.6 1013.0,692.6 1014.0,692.7 1015.1,692.7 1016.1,692.7 1017.2,692.7 1018.2,692.8 1019.3,692.8 1020.3,692.8 1021.4,692.8 1022.5,692.8 1023.5,692.8 1024.6,692.9 1025.6,692.9 1026.7,692.9 1027.7,692.9 1028.8,692.9 1029.9,693.0 1030.9,693.0 1032.0,693.0 1033.0,693.0 1034.1,693.0 1035.1,693.0 1036.2,693.0 1037.3,693.1 1038.3,693.1 1039.4,693.1 1040.4,693.1 1041.5,693.1 1042.5,693.1 1043.6,693.1 1044.6,693.1 1045.7,693.1 1046.8,693.2 1047.8,693.2 1048.9,693.2 1049.9,693.2 1051.0,693.2 1052.0,693.2 1053.1,693.2 1054.2,693.2 1055.2,693.2 1056.3,693.2 1057.3,693.2 1058.4,693.3 1059.4,693.3 1060.5,693.3 1061.5,693.3 1062.6,693.3 1063.7,693.3 1064.7,693.3 1065.8,693.3 1066.8,693.3 1067.9,693.3 1068.9,693.3 1070.0,693.3 1071.1,693.3 1072.1,693.4 1073.2,693.4 1074.2,693.4 1075.3,693.4 1076.3,693.4 1077.4,693.4 1078.4,693.4 1079.5,693.4 1080.6,693.4 1081.6,693.4 1082.7,693.4 1083.7,693.4 1084.8,693.4 1085.8,693.4 1086.9,693.4 1088.0,693.4 1089.0,693.4 1090.1,693.4 1091.1,693.5 1092.2,693.5 1093.2,693.5 1094.3,693.5 1095.4,693.5 1096.4,693.5 1097.5,693.5 1098.5,693.5 1099.6,693.5 1100.6,693.5 1101.7,693.5 1102.7,693.5 1103.8,693.5 1104.9,693.5 1105.9,693.5 1107.0,693.5 1108.0,693.5 1109.1,693.5 1110.1,693.5 1111.2,693.5 1112.3,693.5 1113.3,693.5 1114.4,693.5 1115.4,693.5 1116.5,693.5 1117.5,693.5 1118.6,693.6 1119.6,693.6 1120.7,693.6 1121.8,693.6 1122.8,693.6 1123.9,693.6 1124.9,693.6 1126.0,693.6 1127.0,693.6 1128.1,693.6 1129.2,693.6 1130.2,693.6 1131.3,693.6 1132.3,693.6 1133.4,693.6 1134.4,693.6 1135.5,693.6 1136.6,693.6 1137.6,693.6 1138.7,693.6 1139.7,693.6 1140.8,693.6 1141.8,693.6 1142.9,693.6 1143.9,693.6 1145.0,693.6 1146.1,693.6 1147.1,693.6 1148.2,693.6 1149.2,693.6 1150.3,693.6 1151.3,693.6 1152.4,693.6 1153.5,693.6 1154.5,693.6 1155.6,693.6 1156.6,693.6 1157.7,693.6 1158.7,693.6 1159.8,693.6 1160.8,693.6 1161.9,693.6 1163.0,693.7 1164.0,693.7 1165.1,693.7 1166.1,693.7 1167.2,693.7 1168.2,693.7 1169.3,693.7 1170.4,693.7 1171.4,693.7 1172.5,693.7 1173.5,693.7 1174.6,693.7 1175.6,693.7 1176.7,693.7 1177.8,693.7 1178.8,693.7 1179.9,693.7 1180.9,693.7 1182.0,693.7 1183.0,693.7 1184.1,693.7 1185.1,693.7 1186.2,693.7 1187.3,693.7 1188.3,693.7 1189.4,693.7 1190.4,693.7 1191.5,693.7 1192.5,693.7 1193.6,693.7 1194.7,693.7 1195.7,693.7 1196.8,693.7 1197.8,693.7 1198.9,693.7 1199.9,693.7 1201.0,693.7 1202.0,693.7 1203.1,693.7 1204.2,693.7 1205.2,693.7 1206.3,693.7 1207.3,693.7 1208.4,693.7 1209.4,693.7 1210.5,693.7 1211.6,693.7 1212.6,693.7 1213.7,693.7 1214.7,693.7 1215.8,693.7 1216.8,693.7 1217.9,693.7 1218.9,693.7 1220.0,693.7 1221.1,693.7 1222.1,693.7 1223.2,693.7 1224.2,693.7 1225.3,693.7 1226.3,693.7 1227.4,693.7 1228.5,693.7 1229.5,693.7 1230.6,693.7 1231.6,693.7 1232.7,693.7 1233.7,693.7 1234.8,693.7 1235.9,693.7 1236.9,693.7 1238.0,693.7 1239.0,693.7 1240.1,693.7 1241.1,693.7 1242.2,693.7 1243.2,693.7 1244.3,693.7 1245.4,693.7 1246.4,693.7 1247.5,693.7 1248.5,693.7"/>
<polyline fill="none" stroke="#6a2a08" stroke-width="2.2" stroke-linejoin="round" points="330.5,691.1 331.6,691.1 332.6,691.1 333.7,691.1 334.8,691.1 335.8,691.1 336.9,691.1 337.9,691.1 339.0,691.1 340.0,691.1 341.1,691.1 342.1,691.1 343.2,691.1 344.3,691.1 345.3,691.1 346.4,691.1 347.4,691.1 348.5,691.1 349.5,691.1 350.6,691.1 351.7,691.1 352.7,691.1 353.8,691.1 354.8,691.1 355.9,691.1 356.9,691.1 358.0,691.1 359.1,691.1 360.1,691.1 361.2,691.1 362.2,691.1 363.3,691.1 364.3,691.1 365.4,691.1 366.4,691.1 367.5,691.1 368.6,691.1 369.6,691.1 370.7,691.1 371.7,691.1 372.8,691.1 373.8,691.1 374.9,691.1 376.0,691.1 377.0,691.1 378.1,691.1 379.1,691.1 380.2,691.1 381.2,691.1 382.3,691.1 383.3,691.1 384.4,691.1 385.5,691.1 386.5,691.1 387.6,691.1 388.6,691.1 389.7,691.1 390.7,691.1 391.8,691.1 392.9,691.1 393.9,691.1 395.0,691.1 396.0,691.1 397.1,691.1 398.1,691.1 399.2,691.1 400.2,691.1 401.3,691.1 402.4,691.1 403.4,691.1 404.5,691.1 405.5,691.1 406.6,691.1 407.6,691.1 408.7,691.1 409.8,691.1 410.8,691.1 411.9,691.1 412.9,691.1 414.0,691.1 415.0,691.1 416.1,691.1 417.2,691.1 418.2,691.1 419.3,691.1 420.3,691.1 421.4,691.1 422.4,691.1 423.5,691.1 424.5,691.1 425.6,691.1 426.7,691.1 427.7,691.1 428.8,691.1 429.8,691.1 430.9,691.1 431.9,691.1 433.0,691.1 434.1,691.1 435.1,691.1 436.2,691.1 437.2,691.1 438.3,691.1 439.3,691.1 440.4,691.1 441.4,691.1 442.5,691.1 443.6,691.1 444.6,691.1 445.7,691.1 446.7,691.1 447.8,691.1 448.8,691.1 449.9,691.1 451.0,691.1 452.0,691.1 453.1,691.1 454.1,691.1 455.2,691.1 456.2,691.1 457.3,691.1 458.4,691.1 459.4,691.1 460.5,691.1 461.5,691.1 462.6,691.1 463.6,691.1 464.7,691.1 465.7,691.1 466.8,691.1 467.9,691.1 468.9,691.1 470.0,691.1 471.0,691.1 472.1,691.1 473.1,691.1 474.2,691.1 475.3,691.1 476.3,691.1 477.4,691.1 478.4,691.1 479.5,691.1 480.5,691.1 481.6,691.1 482.6,691.1 483.7,691.1 484.8,691.1 485.8,691.1 486.9,691.1 487.9,691.1 489.0,691.1 490.0,691.1 491.1,691.1 492.2,691.1 493.2,691.1 494.3,691.1 495.3,691.1 496.4,691.1 497.4,691.1 498.5,691.1 499.6,691.1 500.6,691.1 501.7,691.1 502.7,691.1 503.8,691.1 504.8,691.1 505.9,691.1 506.9,691.1 508.0,691.1 509.1,691.1 510.1,691.1 511.2,691.1 512.2,691.1 513.3,691.1 514.3,691.1 515.4,691.1 516.5,691.1 517.5,691.1 518.6,691.1 519.6,691.1 520.7,691.1 521.7,691.1 522.8,691.1 523.8,691.1 524.9,691.1 526.0,691.1 527.0,691.1 528.1,691.1 529.1,691.1 530.2,691.1 531.2,691.1 532.3,691.1 533.4,691.1 534.4,691.1 535.5,691.1 536.5,691.1 537.6,691.1 538.6,691.1 539.7,691.1 540.7,691.1 541.8,691.1 542.9,691.1 543.9,691.1 545.0,691.1 546.0,691.1 547.1,691.1 548.1,691.1 549.2,691.1 550.3,691.1 551.3,691.1 552.4,691.1 553.4,691.1 554.5,691.1 555.5,691.1 556.6,691.1 557.7,691.1 558.7,691.1 559.8,691.1 560.8,691.1 561.9,691.1 562.9,691.1 564.0,691.1 565.0,691.1 566.1,691.1 567.2,691.1 568.2,691.1 569.3,691.1 570.3,691.1 571.4,691.1 572.4,691.1 573.5,691.1 574.6,691.1 575.6,691.1 576.7,691.1 577.7,691.1 578.8,691.1 579.8,691.1 580.9,691.1 581.9,691.1 583.0,691.1 584.1,691.1 585.1,691.1 586.2,691.1 587.2,691.1 588.3,691.1 589.3,691.1 590.4,691.1 591.5,691.1 592.5,691.1 593.6,691.1 594.6,691.1 595.7,691.1 596.7,691.1 597.8,691.1 598.9,691.1 599.9,691.1 601.0,691.1 602.0,691.1 603.1,691.1 604.1,691.1 605.2,691.1 606.2,691.1 607.3,691.1 608.4,691.1 609.4,691.1 610.5,691.1 611.5,691.1 612.6,691.1 613.6,691.1 614.7,691.1 615.8,691.1 616.8,691.1 617.9,691.0 618.9,691.0 620.0,691.0 621.0,691.0 622.1,691.0 623.1,691.0 624.2,691.0 625.3,691.0 626.3,691.0 627.4,691.0 628.4,691.0 629.5,691.0 630.5,691.0 631.6,691.0 632.7,691.0 633.7,691.0 634.8,691.0 635.8,691.0 636.9,691.0 637.9,691.0 639.0,691.0 640.0,691.0 641.1,691.0 642.2,691.0 643.2,691.0 644.3,691.0 645.3,691.0 646.4,691.0 647.4,691.0 648.5,691.0 649.6,691.0 650.6,691.0 651.7,691.0 652.7,691.0 653.8,691.0 654.8,691.0 655.9,691.0 657.0,691.0 658.0,691.0 659.1,691.0 660.1,691.0 661.2,691.0 662.2,691.0 663.3,691.0 664.3,691.0 665.4,691.0 666.5,691.0 667.5,691.0 668.6,691.0 669.6,691.0 670.7,691.0 671.7,691.0 672.8,691.0 673.9,691.0 674.9,691.0 676.0,691.0 677.0,691.0 678.1,691.0 679.1,691.0 680.2,691.0 681.2,691.0 682.3,691.0 683.4,691.0 684.4,691.0 685.5,691.0 686.5,691.0 687.6,691.0 688.6,691.0 689.7,691.0 690.8,691.0 691.8,691.0 692.9,691.0 693.9,691.0 695.0,691.0 696.0,691.0 697.1,691.0 698.2,691.0 699.2,691.0 700.3,691.0 701.3,691.0 702.4,691.0 703.4,691.0 704.5,691.0 705.5,690.9 706.6,690.9 707.7,690.9 708.7,690.9 709.8,690.9 710.8,690.9 711.9,690.9 712.9,690.9 714.0,690.9 715.1,690.9 716.1,690.9 717.2,690.9 718.2,690.9 719.3,690.9 720.3,690.9 721.4,690.9 722.4,690.9 723.5,690.9 724.6,690.9 725.6,690.9 726.7,690.9 727.7,690.9 728.8,690.9 729.8,690.9 730.9,690.9 732.0,690.9 733.0,690.9 734.1,690.9 735.1,690.9 736.2,690.9 737.2,690.9 738.3,690.9 739.3,690.9 740.4,690.9 741.5,690.9 742.5,690.9 743.6,690.8 744.6,690.8 745.7,690.8 746.7,690.8 747.8,690.8 748.9,690.8"/>
<polyline fill="none" stroke="#6a2a08" stroke-width="2.2" stroke-linejoin="round" points="789.0,690.7 790.1,690.7 791.1,690.7 792.2,690.7 793.2,690.7 794.3,690.7 795.3,690.6 796.4,690.6 797.5,690.6 798.5,690.6 799.6,690.6 800.6,690.6 801.7,690.6 802.7,690.6 803.8,690.6 804.8,690.6 805.9,690.6 807.0,690.6 808.0,690.6 809.1,690.6 810.1,690.6 811.2,690.6 812.2,690.6 813.3,690.6 814.4,690.6 815.4,690.6 816.5,690.6 817.5,690.6 818.6,690.5 819.6,690.5 820.7,690.5 821.7,690.5 822.8,690.5 823.9,690.5 824.9,690.5 826.0,690.5 827.0,690.5 828.1,690.5 829.1,690.5 830.2,690.5 831.3,690.5 832.3,690.5 833.4,690.5 834.4,690.5 835.5,690.5 836.5,690.5 837.6,690.5 838.7,690.5 839.7,690.5 840.8,690.5 841.8,690.5 842.9,690.5 843.9,690.5 845.0,690.5 846.0,690.5 847.1,690.5 848.2,690.5 849.2,690.5 850.3,690.4 851.3,690.4 852.4,690.4 853.4,690.4 854.5,690.4 855.6,690.4 856.6,690.4 857.7,690.4 858.7,690.4 859.8,690.4 860.8,690.4 861.9,690.4 862.9,690.4 864.0,690.4 865.1,690.4 866.1,690.4 867.2,690.4 868.2,690.4 869.3,690.4 870.3,690.4 871.4,690.4 872.5,690.4 873.5,690.3 874.6,690.3 875.6,690.3 876.7,690.3 877.7,690.3 878.8,690.3 879.8,690.3 880.9,690.3 882.0,690.3 883.0,690.3 884.1,690.2 885.1,690.2 886.2,690.2 887.2,690.2 888.3,690.2 889.4,690.2 890.4,690.1 891.5,690.1 892.5,690.1 893.6,690.1 894.6,690.1 895.7,690.0 896.8,690.0 897.8,690.0 898.9,689.9 899.9,689.9 901.0,689.9 902.0,689.8 903.1,689.8 904.1,689.7 905.2,689.7 906.3,689.7 907.3,689.6 908.4,689.5 909.4,689.5 910.5,689.4 911.5,689.4 912.6,689.3 913.7,689.2 914.7,689.2 915.8,689.1 916.8,689.0 917.9,688.9 918.9,688.9 920.0,688.8 921.0,688.7 922.1,688.6 923.2,688.5 924.2,688.4 925.3,688.3 926.3,688.2 927.4,688.1 928.4,688.0 929.5,687.9 930.6,687.8 931.6,687.7 932.7,687.6 933.7,687.5 934.8,687.5 935.8,687.4 936.9,687.3 938.0,687.3"/>
<polyline fill="none" stroke="#6a2a08" stroke-width="2.2" stroke-linejoin="round" points="949.6,687.5 950.6,687.6 951.7,687.7 952.7,687.9 953.8,688.0 954.9,688.1 955.9,688.3 957.0,688.4 958.0,688.6 959.1,688.7 960.1,688.9 961.2,689.0 962.2,689.2 963.3,689.3 964.4,689.5 965.4,689.6 966.5,689.7 967.5,689.9 968.6,690.0 969.6,690.1 970.7,690.2 971.8,690.4 972.8,690.5 973.9,690.6 974.9,690.7 976.0,690.8 977.0,690.9 978.1,691.0 979.1,691.1 980.2,691.2 981.3,691.2 982.3,691.3 983.4,691.4 984.4,691.5 985.5,691.5 986.5,691.6 987.6,691.7 988.7,691.7 989.7,691.8 990.8,691.8 991.8,691.9 992.9,691.9 993.9,692.0 995.0,692.0 996.1,692.1 997.1,692.1 998.2,692.2 999.2,692.2 1000.3,692.3 1001.3,692.3 1002.4,692.3 1003.4,692.4 1004.5,692.4 1005.6,692.4 1006.6,692.5 1007.7,692.5 1008.7,692.5 1009.8,692.5 1010.8,692.6 1011.9,692.6 1013.0,692.6 1014.0,692.7 1015.1,692.7 1016.1,692.7 1017.2,692.7 1018.2,692.7 1019.3,692.8 1020.3,692.8 1021.4,692.8 1022.5,692.8 1023.5,692.8 1024.6,692.9 1025.6,692.9 1026.7,692.9 1027.7,692.9 1028.8,692.9 1029.9,692.9 1030.9,693.0 1032.0,693.0 1033.0,693.0 1034.1,693.0 1035.1,693.0 1036.2,693.0 1037.3,693.0 1038.3,693.1 1039.4,693.1 1040.4,693.1 1041.5,693.1 1042.5,693.1 1043.6,693.1 1044.6,693.1 1045.7,693.1 1046.8,693.2 1047.8,693.2 1048.9,693.2 1049.9,693.2 1051.0,693.2 1052.0,693.2 1053.1,693.2 1054.2,693.2 1055.2,693.2 1056.3,693.2 1057.3,693.2 1058.4,693.3 1059.4,693.3 1060.5,693.3 1061.5,693.3 1062.6,693.3 1063.7,693.3 1064.7,693.3 1065.8,693.3 1066.8,693.3 1067.9,693.3 1068.9,693.3 1070.0,693.3 1071.1,693.3 1072.1,693.3 1073.2,693.4 1074.2,693.4 1075.3,693.4 1076.3,693.4 1077.4,693.4 1078.4,693.4 1079.5,693.4 1080.6,693.4 1081.6,693.4 1082.7,693.4 1083.7,693.4 1084.8,693.4 1085.8,693.4 1086.9,693.4 1088.0,693.4 1089.0,693.4 1090.1,693.4 1091.1,693.4 1092.2,693.5 1093.2,693.5 1094.3,693.5 1095.4,693.5 1096.4,693.5 1097.5,693.5 1098.5,693.5 1099.6,693.5 1100.6,693.5 1101.7,693.5 1102.7,693.5 1103.8,693.5 1104.9,693.5 1105.9,693.5 1107.0,693.5 1108.0,693.5 1109.1,693.5 1110.1,693.5 1111.2,693.5 1112.3,693.5 1113.3,693.5 1114.4,693.5 1115.4,693.5 1116.5,693.5 1117.5,693.5 1118.6,693.5 1119.6,693.6 1120.7,693.6 1121.8,693.6 1122.8,693.6 1123.9,693.6 1124.9,693.6 1126.0,693.6 1127.0,693.6 1128.1,693.6 1129.2,693.6 1130.2,693.6 1131.3,693.6 1132.3,693.6 1133.4,693.6 1134.4,693.6 1135.5,693.6 1136.6,693.6 1137.6,693.6 1138.7,693.6 1139.7,693.6 1140.8,693.6 1141.8,693.6 1142.9,693.6 1143.9,693.6 1145.0,693.6 1146.1,693.6 1147.1,693.6 1148.2,693.6 1149.2,693.6 1150.3,693.6 1151.3,693.6 1152.4,693.6 1153.5,693.6 1154.5,693.6 1155.6,693.6 1156.6,693.6 1157.7,693.6 1158.7,693.6 1159.8,693.6 1160.8,693.6 1161.9,693.6 1163.0,693.6 1164.0,693.7 1165.1,693.7 1166.1,693.7 1167.2,693.7 1168.2,693.7 1169.3,693.7 1170.4,693.7 1171.4,693.7 1172.5,693.7 1173.5,693.7 1174.6,693.7 1175.6,693.7 1176.7,693.7 1177.8,693.7 1178.8,693.7 1179.9,693.7 1180.9,693.7 1182.0,693.7 1183.0,693.7 1184.1,693.7 1185.1,693.7 1186.2,693.7 1187.3,693.7 1188.3,693.7 1189.4,693.7 1190.4,693.7 1191.5,693.7 1192.5,693.7 1193.6,693.7 1194.7,693.7 1195.7,693.7 1196.8,693.7 1197.8,693.7 1198.9,693.7 1199.9,693.7 1201.0,693.7 1202.0,693.7 1203.1,693.7 1204.2,693.7 1205.2,693.7 1206.3,693.7 1207.3,693.7 1208.4,693.7 1209.4,693.7 1210.5,693.7 1211.6,693.7 1212.6,693.7 1213.7,693.7 1214.7,693.7 1215.8,693.7 1216.8,693.7 1217.9,693.7 1218.9,693.7 1220.0,693.7 1221.1,693.7 1222.1,693.7 1223.2,693.7 1224.2,693.7 1225.3,693.7 1226.3,693.7 1227.4,693.7 1228.5,693.7 1229.5,693.7 1230.6,693.7 1231.6,693.7 1232.7,693.7 1233.7,693.7 1234.8,693.7 1235.9,693.7 1236.9,693.7 1238.0,693.7 1239.0,693.7 1240.1,693.7 1241.1,693.7 1242.2,693.7 1243.2,693.7 1244.3,693.7 1245.4,693.7 1246.4,693.7 1247.5,693.7 1248.5,693.7"/>
<polyline fill="none" stroke="#5a0a70" stroke-width="2.0" stroke-linejoin="round" points="749.9,690.9 751.0,690.9 752.0,690.8 753.1,690.8 754.1,690.8 755.2,690.8 756.3,690.8 757.3,690.8 758.4,690.8 759.4,690.8 760.5,690.8 761.5,690.8 762.6,690.8 763.6,690.8 764.7,690.8 765.8,690.8 766.8,690.8 767.9,690.8 768.9,690.8 770.0,690.8 771.0,690.8 772.1,690.8 773.2,690.8 774.2,690.8 775.3,690.8 776.3,690.8 777.4,690.8 778.4,690.8 779.5,690.8 780.5,690.8 781.6,690.7 782.7,690.7 783.7,690.7 784.8,690.7 785.8,690.7 786.9,690.7 787.9,690.7"/>
<polyline fill="none" stroke="#5a0a70" stroke-width="2.0" stroke-linejoin="round" points="939.0,687.2 940.1,687.2 941.1,687.2 942.2,687.2 943.2,687.2 944.3,687.2 945.3,687.2 946.4,687.3 947.5,687.4 948.5,687.4"/></g><g font-family="Liberation Sans" font-size="11" letter-spacing="-0.2"><text x="323" y="373.3" text-anchor="end" fill="#e0101e">100.0 Deg</text>
<text x="323" y="415.933" text-anchor="end" fill="#e0101e">0.000 Deg</text>
<text x="323" y="458.56600000000003" text-anchor="end" fill="#e0101e">-100.0 Deg</text>
<text x="323" y="501.199" text-anchor="end" fill="#e0101e">-200.0 Deg</text>
<text x="323" y="543.832" text-anchor="end" fill="#e0101e">-300.0 Deg</text>
<text x="323" y="586.4649999999999" text-anchor="end" fill="#e0101e">-400.0 Deg</text>
<text x="323" y="629.098" text-anchor="end" fill="#e0101e">-500.0 Deg</text>
<text x="323" y="672.0999999999999" text-anchor="end" fill="#e0101e">0.250ms</text>
<text x="323" y="723.1399999999999" text-anchor="end" fill="#e0101e">-0.250ms</text>
<text x="323" y="774.18" text-anchor="end" fill="#e0101e">-0.750ms</text>
<text x="323" y="825.2199999999999" text-anchor="end" fill="#e0101e">-1.250ms</text>
<text x="323" y="876.2599999999999" text-anchor="end" fill="#e0101e">-1.750ms</text>
<text x="323" y="927.3" text-anchor="end" fill="#e0101e">-2.250ms</text>
<text x="330.5" y="641.5" text-anchor="middle" fill="#000">1.000kHz</text>
<text x="790.5" y="641.5" text-anchor="middle" fill="#000">10.00kHz</text>
<text x="1249.5" y="641.5" text-anchor="middle" fill="#000">100.0kHz</text>
<text x="330.5" y="939.5" text-anchor="middle" fill="#000">1.000kHz</text>
<text x="790.5" y="939.5" text-anchor="middle" fill="#000">10.00kHz</text>
<text x="1249.5" y="939.5" text-anchor="middle" fill="#000">100.0kHz</text>
<text x="201" y="380" text-anchor="start" fill="#e0101e">A: c2_2</text>
<text x="200.5" y="395.5" text-anchor="start" fill="#1010c0">B: I2_1</text>
<text x="200.5" y="411.0" text-anchor="start" fill="#108010">C: c3_2</text>
<circle cx="196.3" cy="375.5" r="2.6" fill="#e00000"/>
<text x="201" y="678.5" text-anchor="start" fill="#e0101e">A: c2_2</text>
<text x="200.5" y="693.5" text-anchor="start" fill="#1010c0">B: I2_1</text>
<text x="200.5" y="708.5" text-anchor="start" fill="#108010">C: c3_2</text>
<circle cx="196.3" cy="674.0" r="2.6" fill="#e00000"/></g><path d="M180.5 494V508L187.5 501Z" fill="#000"/></svg><div class="a" style="left:0;top:994px;width:1280px;height:30px;background:linear-gradient(#3168d5 0px,#4993e6 2px,#2e6fdc 4px,#245edb 8px,#245ddb 24px,#1941a5 30px)"></div>
<div class="a" style="left:0;top:994px;width:97px;height:30px;border-radius:0 10px 10px 0;background:linear-gradient(#3c8f3c 0px,#5eb35e 3px,#3c9c3c 8px,#319231 20px,#2a7f2a 28px);box-shadow:inset -2px 0 3px #2a6a2a"></div>
<svg width="100" height="30" viewBox="0 0 100 30" style="left:0;top:994px">
 <g transform="translate(11,5) skewY(-6)">
  <rect x="0" y="1" width="8" height="8" fill="#ef5a1e" rx="1"/>
  <rect x="9" y="1" width="8" height="8" fill="#7ebd2c" rx="1"/>
  <rect x="0" y="10" width="8" height="8" fill="#2d8ae8" rx="1"/>
  <rect x="9" y="10" width="8" height="8" fill="#fbbf14" rx="1"/>
 </g>
 <text x="35" y="22" font-family="Liberation Sans" font-size="18" font-weight="bold" font-style="italic" fill="#fff" style="text-shadow:1px 1px 1px #1a4a1a">Start</text>
</svg>
<div class="a" style="left:108px;top:997px;width:159px;height:25px;border-radius:3px;background:linear-gradient(#4d8df0,#3c81f3 30%,#3577ee);border:1px solid #2a5fd0;box-shadow:inset 1px 1px 0 #6aa4f8"></div>
<div class="a" style="left:268px;top:997px;width:159px;height:25px;border-radius:3px;background:linear-gradient(#1a4ebd,#1e52c4 30%,#1f55c8);border:1px solid #17409c;box-shadow:inset 1px 1px 1px #10307a"></div>
<svg width="440" height="30" viewBox="0 0 440 30" style="left:0;top:994px">
 <circle cx="125" cy="15" r="7" fill="#e8561c"/>
 <path d="M119 11Q125 6 131 11Q129 8 125 8Q121 9 119 11Z" fill="#f8c020"/>
 <circle cx="126.5" cy="14" r="3.3" fill="#3b62c0"/>
 <path d="M119 15Q121 21 128 20Q123 18 122 14Z" fill="#f9a03a"/>
 <rect x="278" y="7" width="16" height="16" fill="#f4d6f0"/>
 <rect x="279" y="8" width="14" height="14" fill="#fff"/>
 <path d="M280 11H290M282 11V20M280 14H288M285 9V18" stroke="#404040" stroke-width="1" fill="none"/>
 <circle cx="290" cy="11" r="2.8" fill="#e02020"/><circle cx="290" cy="18" r="2.8" fill="#2040c0"/><circle cx="283" cy="19" r="2.2" fill="#20a040"/>
 <text x="138.5" y="19" font-family="Liberation Sans" font-size="11.5" fill="#fff" textLength="109.5" lengthAdjust="spacingAndGlyphs">[5] Erősítő építése el...</text>
 <text x="298.5" y="19" font-family="Liberation Sans" font-size="11.5" fill="#fff" textLength="58" lengthAdjust="spacingAndGlyphs">CircuitMaker</text>
</svg>
<div class="a" style="left:1098px;top:1002px;color:#fff;font-size:11.5px">HU</div>
<div class="a" style="left:1134px;top:994px;width:146px;height:30px;background:linear-gradient(#1c8ff0 0px,#29a3f9 3px,#109bf2 8px,#0e8fe8 24px,#1478d8 30px);border-left:1px solid #0a4ca8;box-shadow:inset 1px 0 0 #64c2fc"></div>
<svg width="146" height="30" viewBox="0 0 146 30" style="left:1134px;top:994px">
 <path d="M10 21L22 9L24 11L14 23Z" fill="#f0f0f0"/>
 <path d="M13 20L22 11" stroke="#e02020" stroke-width="1.5"/><path d="M15 21L23 13" stroke="#20c020" stroke-width="1.5"/><path d="M11 18L20 9" stroke="#2040e0" stroke-width="1.5"/>
 <path d="M9 22H24" stroke="#303030" stroke-width="1.5"/>
 <path d="M31 9Q35 7 39 9V15Q39 20 35 23Q31 20 31 15Z" fill="#e02020" stroke="#fff" stroke-width="1"/>
 <path d="M33 12L37 17M37 12L33 17" stroke="#fff" stroke-width="1.5"/>
 <circle cx="53" cy="14" r="6.5" fill="#909090"/><circle cx="52" cy="13" r="3.5" fill="#c8c8c8"/>
 <path d="M54 21Q58 20 59 17" stroke="#a8d0f0" stroke-width="1"/>
 <rect x="66" y="7" width="10" height="16" rx="5" fill="#1a3ab0"/>
 <path d="M69 11L73 15L71 17V11L73 13L69 17" stroke="#e02020" stroke-width="1.3" fill="none"/>
 <path d="M84 12H87L91 8V22L87 18H84Z" fill="#e87830"/>
 <path d="M93 10Q96 15 93 20M95 8Q99 15 95 22" stroke="#303030" stroke-width="1" fill="none"/>
 <text x="105.5" y="19" font-family="Liberation Sans" font-size="11.5" fill="#fff" textLength="27.5" lengthAdjust="spacingAndGlyphs">19:32</text>
</svg>
</body></html>
